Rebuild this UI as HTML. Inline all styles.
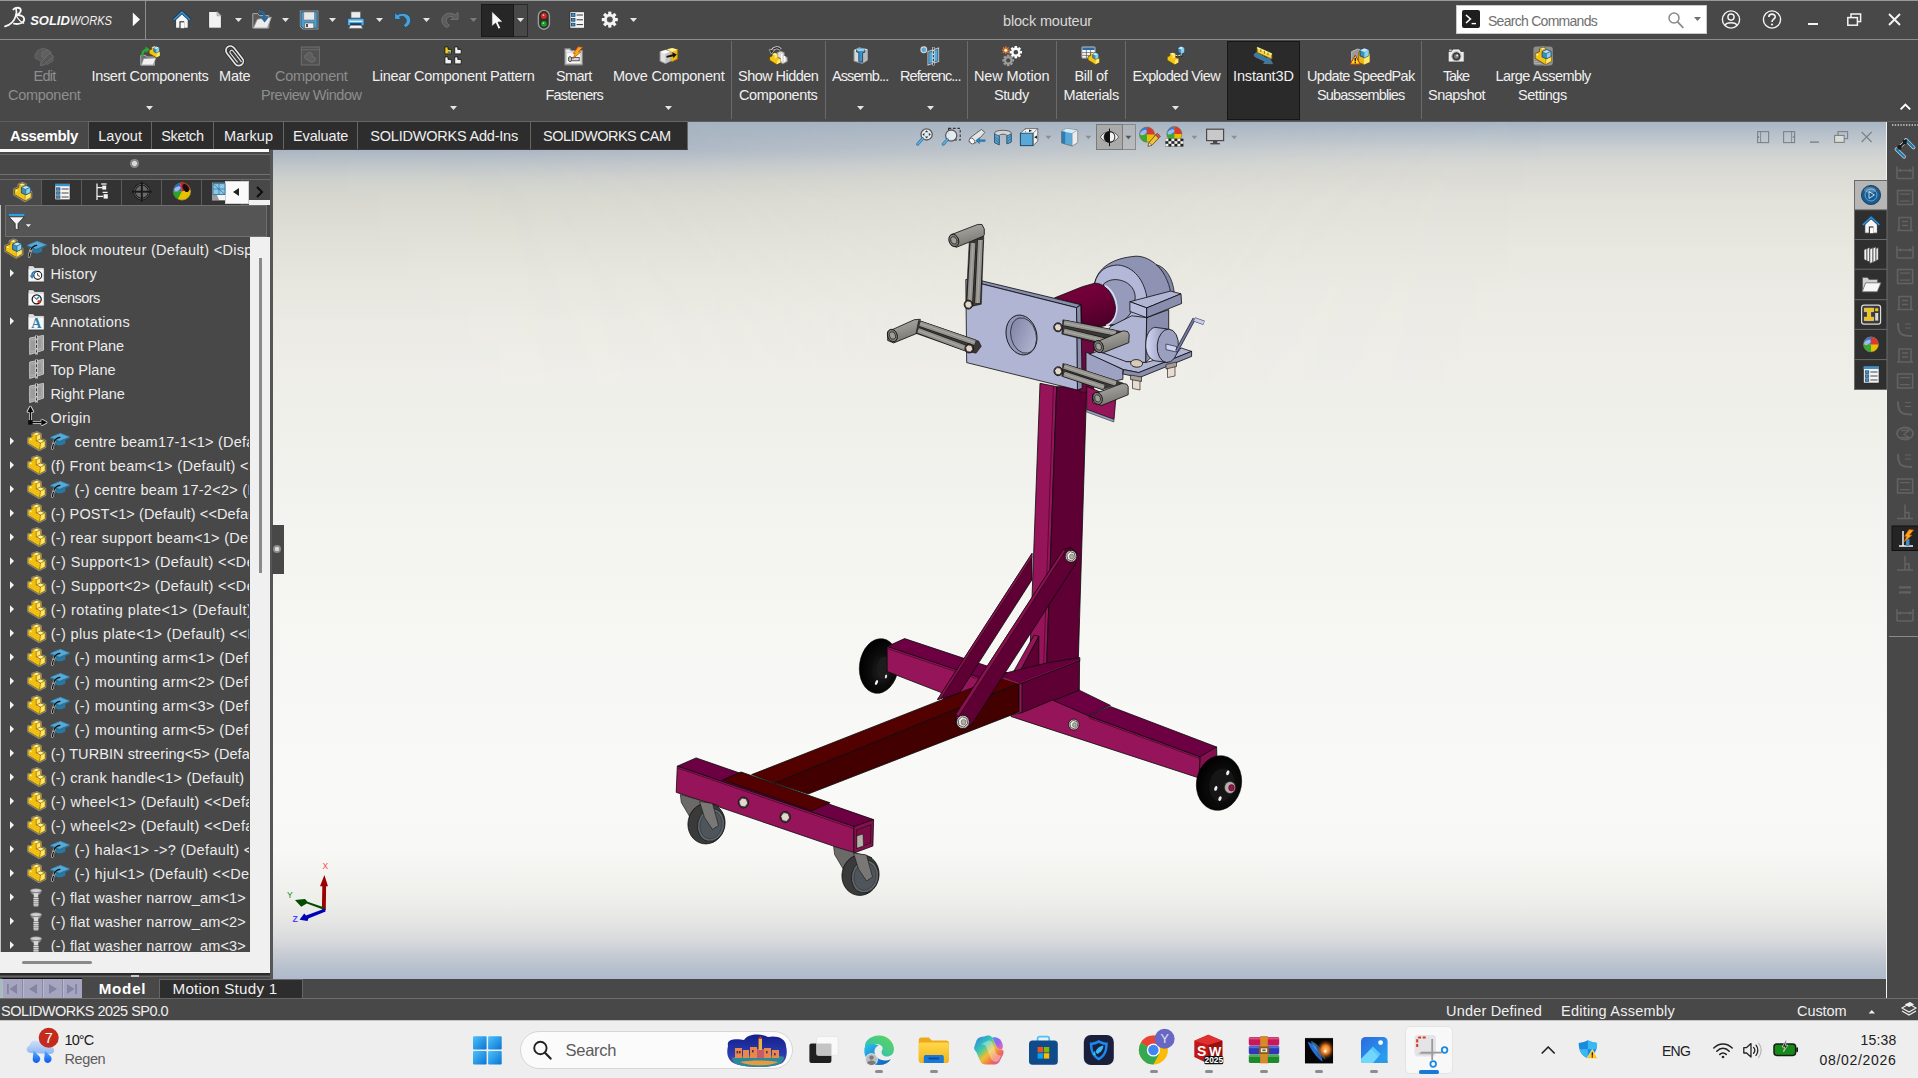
<!DOCTYPE html><html><head><meta charset="utf-8"><title>SOLIDWORKS</title><style>
html,body{margin:0;padding:0;background:#484848;font-family:"Liberation Sans",sans-serif;}
*{font-family:"Liberation Sans",sans-serif;}
body{width:1918px;height:1078px;overflow:hidden;font-family:"Liberation Sans",sans-serif;}
#root{position:relative;width:1918px;height:1078px;overflow:hidden;background:#484848;}
.a{position:absolute;}
.t{position:absolute;white-space:pre;font-family:"Liberation Sans",sans-serif;}
svg{position:absolute;overflow:visible;}

</style></head><body><div id="root">
<div class="a" id="vp" style="left:273px;top:122px;width:1614px;height:857px;background:linear-gradient(to bottom,#a8b5c3 0px,#b8c2cb 13px,#ccd0d1 28px,#d8d9d4 43px,#dddcd6 58px,#e2e2db 78px,#e8e7e0 128px,#ecebe5 178px,#eeede8 228px,#f0f0eb 300px,#f3f3ef 400px,#f6f6f3 500px,#f8f8f6 600px,#f9f9f8 658px,#f8f8f6 728px,#f2f2ef 758px,#eeeeeb 778px,#e6e6e4 798px,#d8dadc 818px,#c6cbd3 833px,#b5bfcd 848px,#aebacc 857px);"></div>
<div class="a" style="left:273px;top:122px;width:1614px;height:260px;background:linear-gradient(to bottom,#a6b2c0 0px,#aab5c3 28px,#bfc5c9 43px,#cfd1cc 58px,#d8d8d0 78px,#e0e0d8 118px,#e6e6de 156px,#ebeae4 200px,#efeee9 260px);-webkit-mask-image:linear-gradient(to right,#000 0%,rgba(0,0,0,0.97) 15%,rgba(0,0,0,0.85) 25%,rgba(0,0,0,0.6) 37%,rgba(0,0,0,0.35) 50%,rgba(0,0,0,0.14) 62%,rgba(0,0,0,0.03) 72%,transparent 80%);mask-image:linear-gradient(to right,#000 0%,rgba(0,0,0,0.97) 15%,rgba(0,0,0,0.85) 25%,rgba(0,0,0,0.6) 37%,rgba(0,0,0,0.35) 50%,rgba(0,0,0,0.14) 62%,rgba(0,0,0,0.03) 72%,transparent 80%);"></div>
<svg style="left:0;top:0" width="1918" height="1078" viewBox="0 0 1918 1078"><defs><linearGradient id="gHole" x1="0" y1="0" x2="1" y2="1"><stop offset="0" stop-color="#7c80a0"/><stop offset="1" stop-color="#b8bcd8"/></linearGradient><linearGradient id="gCyl" x1="0" y1="0" x2="1" y2="0"><stop offset="0" stop-color="#d4d8f6"/><stop offset="0.6" stop-color="#a8accc"/><stop offset="1" stop-color="#9094b4"/></linearGradient><linearGradient id="gTube" x1="0" y1="0" x2="0.4" y2="1"><stop offset="0" stop-color="#7c003c"/><stop offset="0.55" stop-color="#6a0036"/><stop offset="1" stop-color="#4c0028"/></linearGradient><linearGradient id="gGrip" x1="0" y1="0" x2="0.35" y2="1"><stop offset="0" stop-color="#aeaca6"/><stop offset="0.5" stop-color="#96948e"/><stop offset="1" stop-color="#787670"/></linearGradient><radialGradient id="gWheel" cx="0.6" cy="0.55" r="0.6"><stop offset="0" stop-color="#2a2a2a"/><stop offset="0.5" stop-color="#0c0c0c"/><stop offset="1" stop-color="#000"/></radialGradient></defs><ellipse cx="879.0" cy="666.0" rx="19.5" ry="27.5" fill="url(#gWheel)" stroke="#000" stroke-width="0.5" transform="rotate(8 879.0 666.0)"/><ellipse cx="884.0" cy="668.0" rx="8.0" ry="12.0" fill="#1c1c1c" stroke="#000" stroke-width="0.3" transform="rotate(8 884.0 668.0)"/><ellipse cx="876.5" cy="682.5" rx="1.3" ry="2.6" fill="#f4f4f4" stroke="none" stroke-width="0" transform="rotate(25 876.5 682.5)"/><ellipse cx="886.0" cy="676.5" rx="1.1" ry="2.0" fill="#e0e0e0" stroke="none" stroke-width="0" transform="rotate(10 886.0 676.5)"/><polygon points="887.1,646.5 904.6,638.6 1014.0,675.0 992.0,682.0" fill="#6c0042" stroke="#0a0a0a" stroke-width="0.8" stroke-linejoin="round" /><polygon points="887.1,646.5 992.0,681.8 992.0,690.0 945.0,702.0 940.7,692.3 887.1,671.5" fill="#96145a" stroke="#0a0a0a" stroke-width="0.8" stroke-linejoin="round" /><polyline points="887.5,648.6 985.0,681.4" fill="none" stroke="#3a0020" stroke-width="0.6"/><polygon points="1032.0,553.4 1032.0,579.7 959.0,693.6 937.5,699.5" fill="#5e0034" stroke="#0a0a0a" stroke-width="0.8" stroke-linejoin="round" /><polygon points="1032.0,553.4 1032.0,557.6 940.6,699.0 937.5,699.5" fill="#8a1050" stroke="#0a0a0a" stroke-width="0.5" stroke-linejoin="round" /><polygon points="751.7,774.6 998.7,677.4 1019.1,683.5 774.6,783.1" fill="#520000" stroke="#0a0a0a" stroke-width="0.8" stroke-linejoin="round" /><polygon points="774.6,783.1 1019.1,683.5 1019.1,712.0 808.1,794.0" fill="#430000" stroke="#0a0a0a" stroke-width="0.8" stroke-linejoin="round" /><polygon points="1040.0,383.3 1056.7,386.7 1046.5,668.5 1029.3,670.0" fill="#96145a" stroke="#0a0a0a" stroke-width="0.8" stroke-linejoin="round" /><polygon points="1056.7,386.7 1086.7,386.3 1078.3,660.0 1046.5,668.5" fill="#5e0034" stroke="#0a0a0a" stroke-width="0.8" stroke-linejoin="round" /><polyline points="1053.5,386.0 1043.5,668.8" fill="none" stroke="#3a0020" stroke-width="0.6"/><polygon points="1038.8,636.2 1038.8,670.3 1017.4,676.1" fill="#5e0034" stroke="#0a0a0a" stroke-width="0.8" stroke-linejoin="round" /><polygon points="1034.0,635.2 1038.8,636.2 1017.4,676.1 1011.6,675.1" fill="#96145a" stroke="#0a0a0a" stroke-width="0.8" stroke-linejoin="round" /><polygon points="998.0,675.1 1011.6,671.5 1046.5,663.0 1079.8,657.6 1079.8,661.0 1022.2,683.5 1019.1,684.0" fill="#66003a" stroke="#0a0a0a" stroke-width="0.8" stroke-linejoin="round" /><polyline points="998.4,676.4 1019.4,683.6 1079.6,660.4" fill="none" stroke="#8a1a56" stroke-width="1.2"/><polygon points="1019.1,683.5 1022.2,683.0 1022.2,713.1 1019.1,714.2" fill="#96145a" stroke="#0a0a0a" stroke-width="0.8" stroke-linejoin="round" /><polygon points="1022.2,683.0 1079.6,660.6 1079.3,690.6 1022.2,713.6" fill="#5e0034" stroke="#0a0a0a" stroke-width="0.8" stroke-linejoin="round" /><polygon points="1010.8,714.8 1022.2,712.6 1053.5,699.6 1088.5,716.0 1200.2,756.8 1199.1,778.0 1011.0,716.5" fill="#96145a" stroke="#0a0a0a" stroke-width="0.8" stroke-linejoin="round" /><polygon points="1053.5,700.6 1079.3,690.2 1110.4,705.4 1088.5,715.6" fill="#6c0042" stroke="#0a0a0a" stroke-width="0.8" stroke-linejoin="round" /><polygon points="1088.5,715.9 1110.4,706.5 1216.6,747.0 1200.2,756.8" fill="#6c0042" stroke="#0a0a0a" stroke-width="0.8" stroke-linejoin="round" /><polyline points="1089.0,718.0 1200.0,758.6" fill="none" stroke="#3a0020" stroke-width="0.6"/><polygon points="1200.2,756.8 1216.6,747.0 1217.0,762.0 1199.1,778.0" fill="#86104e" stroke="#0a0a0a" stroke-width="0.8" stroke-linejoin="round" /><ellipse cx="1219.0" cy="783.0" rx="22.5" ry="27.5" fill="url(#gWheel)" stroke="#000" stroke-width="0.5" transform="rotate(10 1219.0 783.0)"/><ellipse cx="1222.0" cy="785.0" rx="13.0" ry="17.0" fill="#161616" stroke="#000" stroke-width="0.3" transform="rotate(10 1222.0 785.0)"/><ellipse cx="1227.8" cy="772.8" rx="1.5" ry="2.5" fill="#f0f0f0" stroke="none" stroke-width="0" transform="rotate(20 1227.8 772.8)"/><ellipse cx="1215.8" cy="788.4" rx="1.5" ry="2.5" fill="#f0f0f0" stroke="none" stroke-width="0" transform="rotate(20 1215.8 788.4)"/><ellipse cx="1220.0" cy="798.6" rx="1.5" ry="2.5" fill="#f0f0f0" stroke="none" stroke-width="0" transform="rotate(20 1220.0 798.6)"/><ellipse cx="1230.0" cy="787.5" rx="5.5" ry="6.0" fill="#b8b0a8" stroke="#222" stroke-width="0.6" transform="rotate(0 1230.0 787.5)"/><ellipse cx="1231.5" cy="787.8" rx="2.8" ry="3.2" fill="#96145a" stroke="#400" stroke-width="0.5" transform="rotate(0 1231.5 787.8)"/><polygon points="1063.2,549.5 1071.0,547.6 1077.0,553.0 1075.9,563.1 971.6,724.8 963.0,729.0 955.0,723.3 956.0,714.0" fill="#5e0034" stroke="#0a0a0a" stroke-width="0.8" stroke-linejoin="round" /><polygon points="1063.2,549.5 1065.6,550.6 958.6,716.6 956.0,714.0" fill="#8a1050" stroke="#0a0a0a" stroke-width="0.5" stroke-linejoin="round" /><ellipse cx="1071.0" cy="556.3" rx="5.8" ry="6.0" fill="#d4ccc4" stroke="#0a0a0a" stroke-width="0.8" transform="rotate(0 1071.0 556.3)"/><polygon points="1075.2,557.9 1071.8,561.0 1067.6,559.4 1066.8,554.7 1070.2,551.6 1074.4,553.2" fill="#f2eee8" stroke="#0a0a0a" stroke-width="0.6" stroke-linejoin="round" /><ellipse cx="1071.6" cy="556.6" rx="2.1" ry="2.5" fill="#b4aca4" stroke="#444" stroke-width="0.5" transform="rotate(0 1071.6 556.6)"/><ellipse cx="962.9" cy="721.9" rx="6.4" ry="6.7" fill="#d4ccc4" stroke="#0a0a0a" stroke-width="0.8" transform="rotate(0 962.9 721.9)"/><polygon points="967.6,723.7 963.8,727.1 959.0,725.3 958.2,720.1 962.0,716.7 966.8,718.5" fill="#f2eee8" stroke="#0a0a0a" stroke-width="0.6" stroke-linejoin="round" /><ellipse cx="963.5" cy="722.2" rx="2.4" ry="2.8" fill="#b4aca4" stroke="#444" stroke-width="0.5" transform="rotate(0 963.5 722.2)"/><ellipse cx="1073.8" cy="724.6" rx="5.3" ry="5.5" fill="#d4ccc4" stroke="#0a0a0a" stroke-width="0.8" transform="rotate(0 1073.8 724.6)"/><polygon points="1077.7,726.1 1074.5,728.9 1070.6,727.4 1069.9,723.1 1073.1,720.3 1077.0,721.8" fill="#f2eee8" stroke="#0a0a0a" stroke-width="0.6" stroke-linejoin="round" /><ellipse cx="1074.4" cy="724.9" rx="1.9" ry="2.3" fill="#b4aca4" stroke="#444" stroke-width="0.5" transform="rotate(0 1074.4 724.9)"/><polygon points="677.3,766.2 696.1,757.9 873.6,819.6 853.9,826.6" fill="#6c0042" stroke="#0a0a0a" stroke-width="0.8" stroke-linejoin="round" /><polygon points="722.6,779.9 741.1,772.0 830.1,802.8 811.6,810.8" fill="#520000" stroke="#0a0a0a" stroke-width="0.8" stroke-linejoin="round" /><polygon points="677.3,766.2 853.9,826.6 853.9,853.1 676.2,792.3" fill="#96145a" stroke="#0a0a0a" stroke-width="0.8" stroke-linejoin="round" /><polyline points="678.0,768.2 853.9,828.6" fill="none" stroke="#3a0020" stroke-width="0.6"/><polygon points="853.9,826.6 873.6,819.6 872.9,846.0 853.9,853.1" fill="#86104e" stroke="#0a0a0a" stroke-width="0.8" stroke-linejoin="round" /><polygon points="856.5,830.0 871.0,824.5 870.5,843.0 856.5,848.5" fill="#7a0c46" stroke="#0a0a0a" stroke-width="0.5" stroke-linejoin="round" /><polygon points="856.8,836.0 863.0,834.0 863.5,846.0 856.8,848.3" fill="#b8b0a8" stroke="#0a0a0a" stroke-width="0.5" stroke-linejoin="round" /><ellipse cx="743.4" cy="802.5" rx="5.2" ry="5.5" fill="#55504a" stroke="#0a0a0a" stroke-width="0.8" transform="rotate(0 743.4 802.5)"/><polygon points="747.8,803.3 744.9,806.9 740.6,806.1 739.0,801.7 741.9,798.1 746.2,798.9" fill="#e4d8cc" stroke="#0a0a0a" stroke-width="0.6" stroke-linejoin="round" /><ellipse cx="785.2" cy="817.0" rx="5.2" ry="5.5" fill="#55504a" stroke="#0a0a0a" stroke-width="0.8" transform="rotate(0 785.2 817.0)"/><polygon points="789.6,817.8 786.7,821.4 782.4,820.6 780.8,816.2 783.7,812.6 788.0,813.4" fill="#e4d8cc" stroke="#0a0a0a" stroke-width="0.6" stroke-linejoin="round" /><polygon points="680.3,794.5 718.3,805.5 716.3,818.5 694.3,824.5 681.3,802.5" fill="#6c6a68" stroke="#0a0a0a" stroke-width="0.6" stroke-linejoin="round" /><ellipse cx="706.5" cy="823.5" rx="18.5" ry="20.5" fill="#3a3a3a" stroke="#0a0a0a" stroke-width="0.7" transform="rotate(12 706.5 823.5)"/><ellipse cx="711.0" cy="825.0" rx="13.5" ry="16.5" fill="#5f666c" stroke="#0a0a0a" stroke-width="0.6" transform="rotate(12 711.0 825.0)"/><ellipse cx="711.0" cy="825.0" rx="11.0" ry="14.0" fill="#4e555b" stroke="#222" stroke-width="0.4" transform="rotate(12 711.0 825.0)"/><polygon points="699.5,801.5 712.5,803.5 718.5,825.5 712.5,829.5 704.5,817.5" fill="#7a7876" stroke="#0a0a0a" stroke-width="0.5" stroke-linejoin="round" /><polygon points="833.6,846.5 871.6,857.5 869.6,870.5 847.6,876.5 834.6,854.5" fill="#6c6a68" stroke="#0a0a0a" stroke-width="0.6" stroke-linejoin="round" /><ellipse cx="860.5" cy="875.0" rx="18.5" ry="20.5" fill="#3a3a3a" stroke="#0a0a0a" stroke-width="0.7" transform="rotate(12 860.5 875.0)"/><ellipse cx="865.0" cy="876.5" rx="13.5" ry="16.5" fill="#5f666c" stroke="#0a0a0a" stroke-width="0.6" transform="rotate(12 865.0 876.5)"/><ellipse cx="865.0" cy="876.5" rx="11.0" ry="14.0" fill="#4e555b" stroke="#222" stroke-width="0.4" transform="rotate(12 865.0 876.5)"/><polygon points="853.5,853.0 866.5,855.0 872.5,877.0 866.5,881.0 858.5,869.0" fill="#7a7876" stroke="#0a0a0a" stroke-width="0.5" stroke-linejoin="round" /><polygon points="1080.0,303.0 1094.0,300.0 1094.0,392.0 1080.0,392.0" fill="#6a0a3e" stroke="#0a0a0a" stroke-width="0.4" stroke-linejoin="round" /><polygon points="1086.7,386.3 1115.8,398.7 1114.0,419.5 1086.7,409.5" fill="#96145a" stroke="#0a0a0a" stroke-width="0.8" stroke-linejoin="round" /><polygon points="1086.7,409.5 1114.0,419.5 1113.8,422.0 1086.7,412.0" fill="#9da1c2" stroke="#0a0a0a" stroke-width="0.5" stroke-linejoin="round" /><polygon points="1086.0,352.0 1122.9,369.5 1122.9,379.3 1100.0,384.0 1086.0,380.0" fill="#9da1c2" stroke="#0a0a0a" stroke-width="0.8" stroke-linejoin="round" /><path d="M1094.7,283 C1098,268 1112,258 1136,256.2 C1152,256 1166,272 1170.5,286 L1174,293 L1147,318 L1110,326 Z" fill="#8f93b3" stroke="#0a0a0a" stroke-width="0.8"/><path d="M1156.4,264.7 C1166,267 1173,279 1174.3,293 L1170.5,292 C1169,282 1163,270 1156.4,264.7 Z" fill="#8286a6" stroke="#0a0a0a" stroke-width="0.7"/><path d="M1094.7,283 C1098,270 1107,265.5 1117.6,265 C1133,266 1145,280 1147.2,300 L1146,318 L1100,322 Z" fill="#b4b8d8" stroke="#0a0a0a" stroke-width="0.8"/><path d="M1103.5,284.1 C1108,280 1113,279.3 1117.6,279.7 C1128,281 1135,288 1135.2,297 C1135,310 1128,320 1115.8,324.6 L1100,325 Z" fill="#969abb" stroke="#0a0a0a" stroke-width="0.8"/><polygon points="1110.5,326.4 1131.7,315.8 1146.7,317.6 1145.8,362.5 1124.6,361.7 1098.0,351.0" fill="#b1b5d4" stroke="#0a0a0a" stroke-width="0.8" stroke-linejoin="round" /><polygon points="1146.7,317.6 1168.7,309.6 1168.7,340.0 1145.8,362.5" fill="#8a8eae" stroke="#0a0a0a" stroke-width="0.8" stroke-linejoin="round" /><path d="M1054.7,297.8 L1082.3,286.7 L1094.7,283.2 C1106,283 1115,296 1115.8,310.5 C1115,320 1110,324 1105.2,325.5 L1081.8,332 L1081.2,305 Z" fill="url(#gTube)" stroke="#0a0a0a" stroke-width="0.8"/><path d="M1105.2,285.8 C1114,291 1118,303 1116.5,312 C1115,320 1110,324.5 1106,325.5" fill="none" stroke="#d8dcf4" stroke-width="1.6"/><polygon points="1129.9,301.7 1170.5,291.1 1181.0,293.8 1146.7,307.9" fill="#b1b5d4" stroke="#0a0a0a" stroke-width="0.8" stroke-linejoin="round" /><polygon points="1129.9,301.7 1146.7,307.9 1146.7,317.6 1129.9,311.4" fill="#b8bcdc" stroke="#0a0a0a" stroke-width="0.8" stroke-linejoin="round" /><polygon points="1146.7,307.9 1181.0,293.8 1181.6,303.5 1146.7,317.6" fill="#8a8eae" stroke="#0a0a0a" stroke-width="0.8" stroke-linejoin="round" /><polygon points="1098.2,351.1 1126.4,361.7 1131.7,361.7 1145.8,362.5 1175.8,354.6 1181.0,347.9 1191.6,351.4 1138.7,372.6 1123.7,369.6 1089.4,354.0" fill="#b1b5d4" stroke="#0a0a0a" stroke-width="0.8" stroke-linejoin="round" /><polygon points="1123.7,369.6 1138.7,372.6 1191.6,351.4 1191.6,356.4 1139.6,377.5 1122.9,374.0" fill="#8a8eae" stroke="#0a0a0a" stroke-width="0.8" stroke-linejoin="round" /><path d="M1154.6,327.3 L1167.8,329 L1167.8,362.5 L1154.6,360.8 C1147,358 1145.5,350 1145.8,344 C1146,336 1149,329 1154.6,327.3 Z" fill="url(#gCyl)" stroke="#0a0a0a" stroke-width="0.8"/><ellipse cx="1167.8" cy="345.8" rx="10.6" ry="16.7" fill="#9ca0c0" stroke="#0a0a0a" stroke-width="0.8" transform="rotate(4 1167.8 345.8)"/><polygon points="1166.0,344.0 1176.6,346.6 1176.6,352.0 1166.0,349.6" fill="#d0d4f4" stroke="#0a0a0a" stroke-width="0.6" stroke-linejoin="round" /><polyline points="1176.6,351.1 1194.3,318.5" fill="none" stroke="#2c2e40" stroke-width="3.4"/><polyline points="1176.6,351.1 1194.3,318.5" fill="none" stroke="#7478a0" stroke-width="1.8"/><polyline points="1194.3,319.3 1204.0,322.9" fill="none" stroke="#50546e" stroke-width="4.6"/><polyline points="1194.6,319.4 1203.6,322.8" fill="none" stroke="#c8ccf0" stroke-width="3.2"/><polygon points="1132.5,377.0 1140.0,378.5 1140.0,390.0 1132.5,388.5" fill="#e8dcd0" stroke="#0a0a0a" stroke-width="0.6" stroke-linejoin="round" /><polygon points="1130.5,375.0 1141.5,377.0 1141.5,381.5 1130.5,379.5" fill="#a8a098" stroke="#0a0a0a" stroke-width="0.6" stroke-linejoin="round" /><polygon points="1167.5,366.0 1175.0,364.0 1175.0,376.0 1167.5,377.5" fill="#e8dcd0" stroke="#0a0a0a" stroke-width="0.6" stroke-linejoin="round" /><polygon points="1166.0,364.5 1176.5,362.0 1176.5,366.5 1166.0,369.0" fill="#a8a098" stroke="#0a0a0a" stroke-width="0.6" stroke-linejoin="round" /><ellipse cx="1136.6" cy="363.4" rx="6.0" ry="3.8" fill="#d8ccb8" stroke="#0a0a0a" stroke-width="0.8" transform="rotate(5 1136.6 363.4)"/><polygon points="981.3,280.7 1080.4,304.6 1076.5,307.7 981.3,283.8" fill="#8a8eae" stroke="#0a0a0a" stroke-width="0.8" stroke-linejoin="round" /><polygon points="1076.5,307.7 1080.8,305.0 1082.2,388.3 1077.4,390.0" fill="#8a8eae" stroke="#0a0a0a" stroke-width="0.8" stroke-linejoin="round" /><polygon points="965.8,279.4 981.3,283.8 1076.5,307.7 1077.4,390.0 966.7,362.6" fill="#b1b5d4" stroke="#0a0a0a" stroke-width="0.8" stroke-linejoin="round" /><ellipse cx="1021.5" cy="335.0" rx="15.2" ry="20.2" fill="#9296b6" stroke="#0a0a0a" stroke-width="0.8" transform="rotate(-14 1021.5 335.0)"/><ellipse cx="1023.5" cy="335.5" rx="12.6" ry="18.0" fill="url(#gHole)" stroke="#0a0a0a" stroke-width="0.6" transform="rotate(-14 1023.5 335.5)"/><polygon points="951.2,234.7 977.8,224.4 982.0,224.5 984.3,229.0 984.3,234.7 983.0,236.5 956.4,247.3 951.0,245.0" fill="url(#gGrip)" stroke="#0a0a0a" stroke-width="0.8" stroke-linejoin="round" /><ellipse cx="953.8" cy="240.4" rx="4.8" ry="6.4" fill="#7c7a76" stroke="#0a0a0a" stroke-width="0.8" transform="rotate(-20 953.8 240.4)"/><ellipse cx="953.8" cy="240.4" rx="2.9" ry="3.8" fill="#a09e98" stroke="#0a0a0a" stroke-width="0.6" transform="rotate(-20 953.8 240.4)"/><polygon points="969.2,242.5 983.8,236.0 981.3,304.2 965.8,307.7" fill="#3a3836" stroke="#0a0a0a" stroke-width="0.5" stroke-linejoin="round" /><polyline points="973.0,243.0 969.6,304.5" fill="none" stroke="#141412" stroke-width="6.2"/><polyline points="973.0,243.0 969.6,304.5" fill="none" stroke="#94928c" stroke-width="5.0"/><polyline points="973.0,243.0 969.6,304.5" fill="none" stroke="#aeaca6" stroke-width="1.0"/><polyline points="980.4,240.0 977.6,303.0" fill="none" stroke="#141412" stroke-width="6.2"/><polyline points="980.4,240.0 977.6,303.0" fill="none" stroke="#94928c" stroke-width="5.0"/><polyline points="980.4,240.0 977.6,303.0" fill="none" stroke="#aeaca6" stroke-width="1.0"/><ellipse cx="968.4" cy="304.6" rx="4.3" ry="4.5" fill="#55504a" stroke="#0a0a0a" stroke-width="0.8" transform="rotate(0 968.4 304.6)"/><polygon points="972.0,305.3 969.7,308.2 966.1,307.6 964.8,303.9 967.1,301.0 970.7,301.6" fill="#e4d8cc" stroke="#0a0a0a" stroke-width="0.6" stroke-linejoin="round" /><polygon points="887.7,331.7 914.3,319.7 920.3,319.3 919.0,328.0 916.9,333.4 893.7,342.9 887.7,340.5" fill="url(#gGrip)" stroke="#0a0a0a" stroke-width="0.8" stroke-linejoin="round" /><ellipse cx="892.4" cy="335.5" rx="4.8" ry="6.4" fill="#7c7a76" stroke="#0a0a0a" stroke-width="0.8" transform="rotate(-20 892.4 335.5)"/><ellipse cx="892.4" cy="335.5" rx="2.9" ry="3.8" fill="#a09e98" stroke="#0a0a0a" stroke-width="0.6" transform="rotate(-20 892.4 335.5)"/><polygon points="918.6,320.5 978.7,341.1 981.3,346.3 976.1,353.2 966.7,351.4 916.0,333.4" fill="#3a3836" stroke="#0a0a0a" stroke-width="0.5" stroke-linejoin="round" /><polyline points="920.0,323.6 975.0,342.6" fill="none" stroke="#141412" stroke-width="6.2"/><polyline points="920.0,323.6 975.0,342.6" fill="none" stroke="#94928c" stroke-width="5.0"/><polyline points="920.0,323.6 975.0,342.6" fill="none" stroke="#aeaca6" stroke-width="1.0"/><polyline points="918.0,330.4 969.0,349.4" fill="none" stroke="#141412" stroke-width="6.2"/><polyline points="918.0,330.4 969.0,349.4" fill="none" stroke="#94928c" stroke-width="5.0"/><polyline points="918.0,330.4 969.0,349.4" fill="none" stroke="#aeaca6" stroke-width="1.0"/><ellipse cx="969.2" cy="348.5" rx="4.3" ry="4.5" fill="#55504a" stroke="#0a0a0a" stroke-width="0.8" transform="rotate(0 969.2 348.5)"/><polygon points="972.8,349.2 970.5,352.1 966.9,351.5 965.6,347.8 967.9,344.9 971.5,345.5" fill="#e4d8cc" stroke="#0a0a0a" stroke-width="0.6" stroke-linejoin="round" /><polygon points="1062.9,319.8 1123.1,331.8 1100.6,343.7 1061.8,334.1" fill="#3a3836" stroke="#0a0a0a" stroke-width="0.5" stroke-linejoin="round" /><polyline points="1064.0,322.8 1116.0,333.2" fill="none" stroke="#141412" stroke-width="6.2"/><polyline points="1064.0,322.8 1116.0,333.2" fill="none" stroke="#94928c" stroke-width="5.0"/><polyline points="1064.0,322.8 1116.0,333.2" fill="none" stroke="#aeaca6" stroke-width="1.0"/><polyline points="1064.0,331.0 1104.0,340.6" fill="none" stroke="#141412" stroke-width="6.2"/><polyline points="1064.0,331.0 1104.0,340.6" fill="none" stroke="#94928c" stroke-width="5.0"/><polyline points="1064.0,331.0 1104.0,340.6" fill="none" stroke="#aeaca6" stroke-width="1.0"/><ellipse cx="1058.0" cy="327.3" rx="4.3" ry="4.5" fill="#55504a" stroke="#0a0a0a" stroke-width="0.8" transform="rotate(0 1058.0 327.3)"/><polygon points="1061.6,328.0 1059.3,330.9 1055.7,330.3 1054.4,326.6 1056.7,323.7 1060.3,324.3" fill="#e4d8cc" stroke="#0a0a0a" stroke-width="0.6" stroke-linejoin="round" /><polygon points="1094.5,342.7 1123.1,330.8 1127.5,331.5 1129.2,334.5 1128.8,342.7 1102.7,352.9 1094.5,350.8" fill="url(#gGrip)" stroke="#0a0a0a" stroke-width="0.8" stroke-linejoin="round" /><ellipse cx="1098.6" cy="346.6" rx="4.6" ry="6.2" fill="#7c7a76" stroke="#0a0a0a" stroke-width="0.8" transform="rotate(-20 1098.6 346.6)"/><ellipse cx="1098.6" cy="346.6" rx="2.8" ry="3.7" fill="#a09e98" stroke="#0a0a0a" stroke-width="0.6" transform="rotate(-20 1098.6 346.6)"/><polygon points="1062.9,363.5 1123.1,383.1 1102.7,389.6 1061.8,376.3" fill="#3a3836" stroke="#0a0a0a" stroke-width="0.5" stroke-linejoin="round" /><polyline points="1064.0,366.4 1116.0,383.4" fill="none" stroke="#141412" stroke-width="6.2"/><polyline points="1064.0,366.4 1116.0,383.4" fill="none" stroke="#94928c" stroke-width="5.0"/><polyline points="1064.0,366.4 1116.0,383.4" fill="none" stroke="#aeaca6" stroke-width="1.0"/><polyline points="1064.0,373.8 1104.0,387.2" fill="none" stroke="#141412" stroke-width="6.2"/><polyline points="1064.0,373.8 1104.0,387.2" fill="none" stroke="#94928c" stroke-width="5.0"/><polyline points="1064.0,373.8 1104.0,387.2" fill="none" stroke="#aeaca6" stroke-width="1.0"/><ellipse cx="1058.2" cy="371.2" rx="4.3" ry="4.5" fill="#55504a" stroke="#0a0a0a" stroke-width="0.8" transform="rotate(0 1058.2 371.2)"/><polygon points="1061.8,371.9 1059.5,374.8 1055.9,374.2 1054.6,370.5 1056.9,367.6 1060.5,368.2" fill="#e4d8cc" stroke="#0a0a0a" stroke-width="0.6" stroke-linejoin="round" /><polygon points="1092.4,394.7 1122.0,383.5 1126.5,384.0 1128.2,386.5 1128.2,394.7 1101.6,405.5 1092.9,402.9" fill="url(#gGrip)" stroke="#0a0a0a" stroke-width="0.8" stroke-linejoin="round" /><ellipse cx="1097.6" cy="398.4" rx="4.6" ry="6.2" fill="#7c7a76" stroke="#0a0a0a" stroke-width="0.8" transform="rotate(-20 1097.6 398.4)"/><ellipse cx="1097.6" cy="398.4" rx="2.8" ry="3.7" fill="#a09e98" stroke="#0a0a0a" stroke-width="0.6" transform="rotate(-20 1097.6 398.4)"/></svg>
<div class="a" style="left:0px;top:0px;width:1918px;height:1px;background:#9a9a9a;"></div>
<div class="a" style="left:0px;top:39px;width:1918px;height:1px;background:#8c8c8c;"></div>
<div class="a" style="left:145px;top:1px;width:1px;height:38px;background:#8c8c8c;"></div>
<div class="a" style="left:481px;top:4px;width:33px;height:33px;background:#262626;border:1px solid #1a1a1a;box-sizing:border-box;"></div>
<div class="a" style="left:514px;top:4px;width:14px;height:33px;background:#484848;border:1px solid #2a2a2a;border-left:none;box-sizing:border-box;"></div>
<svg style="left:234.5px;top:17.5px" width="7" height="4" viewBox="0 0 7 4"><polygon points="0,0 7,0 3.5,4" fill="#e6e6e6"/></svg>
<svg style="left:281.5px;top:17.5px" width="7" height="4" viewBox="0 0 7 4"><polygon points="0,0 7,0 3.5,4" fill="#e6e6e6"/></svg>
<svg style="left:328.5px;top:17.5px" width="7" height="4" viewBox="0 0 7 4"><polygon points="0,0 7,0 3.5,4" fill="#e6e6e6"/></svg>
<svg style="left:375.5px;top:17.5px" width="7" height="4" viewBox="0 0 7 4"><polygon points="0,0 7,0 3.5,4" fill="#e6e6e6"/></svg>
<svg style="left:422.5px;top:17.5px" width="7" height="4" viewBox="0 0 7 4"><polygon points="0,0 7,0 3.5,4" fill="#e6e6e6"/></svg>
<svg style="left:469.5px;top:17.5px" width="7" height="4" viewBox="0 0 7 4"><polygon points="0,0 7,0 3.5,4" fill="#7a7a7a"/></svg>
<svg style="left:517.0px;top:17.5px" width="7" height="4" viewBox="0 0 7 4"><polygon points="0,0 7,0 3.5,4" fill="#e6e6e6"/></svg>
<svg style="left:630.0px;top:17.5px" width="7" height="4" viewBox="0 0 7 4"><polygon points="0,0 7,0 3.5,4" fill="#e6e6e6"/></svg>
<div class="a" style="left:1456px;top:5px;width:251px;height:29px;background:#ffffff;border:1px solid #c8c8c8;box-sizing:border-box;"></div>
<div class="a" style="left:1462px;top:10px;width:18px;height:18px;background:#1e1e1e;border-radius:2px;"></div>
<svg style="left:1694.0px;top:17.0px" width="7" height="4" viewBox="0 0 7 4"><polygon points="0,0 7,0 3.5,4" fill="#707070"/></svg>
<div class="a" style="left:731px;top:41px;width:1px;height:78px;background:#6a6a6a;"></div>
<div class="a" style="left:825px;top:41px;width:1px;height:78px;background:#6a6a6a;"></div>
<div class="a" style="left:967px;top:41px;width:1px;height:78px;background:#6a6a6a;"></div>
<div class="a" style="left:1056px;top:41px;width:1px;height:78px;background:#6a6a6a;"></div>
<div class="a" style="left:1125px;top:41px;width:1px;height:78px;background:#6a6a6a;"></div>
<div class="a" style="left:1421px;top:41px;width:1px;height:78px;background:#6a6a6a;"></div>
<div class="a" style="left:1227px;top:41px;width:73px;height:79px;background:#2a2a2a;border:1px solid #161616;box-sizing:border-box;"></div>
<svg style="left:145.5px;top:106.0px" width="7" height="4" viewBox="0 0 7 4"><polygon points="0,0 7,0 3.5,4" fill="#e6e6e6"/></svg>
<svg style="left:449.5px;top:106.0px" width="7" height="4" viewBox="0 0 7 4"><polygon points="0,0 7,0 3.5,4" fill="#e6e6e6"/></svg>
<svg style="left:664.5px;top:106.0px" width="7" height="4" viewBox="0 0 7 4"><polygon points="0,0 7,0 3.5,4" fill="#e6e6e6"/></svg>
<svg style="left:856.5px;top:106.0px" width="7" height="4" viewBox="0 0 7 4"><polygon points="0,0 7,0 3.5,4" fill="#e6e6e6"/></svg>
<svg style="left:926.5px;top:106.0px" width="7" height="4" viewBox="0 0 7 4"><polygon points="0,0 7,0 3.5,4" fill="#e6e6e6"/></svg>
<svg style="left:1171.5px;top:106.0px" width="7" height="4" viewBox="0 0 7 4"><polygon points="0,0 7,0 3.5,4" fill="#e6e6e6"/></svg>
<div class="a" style="left:0px;top:121px;width:1918px;height:1px;background:#5e5e5e;"></div>
<div class="a" style="left:88px;top:121px;width:600px;height:29px;background:#2d2d2d;border:1px solid #666;border-bottom:1px solid #3a3a3a;box-sizing:border-box;"></div>
<div class="a" style="left:151px;top:122px;width:1px;height:27px;background:#666;"></div>
<div class="a" style="left:213px;top:122px;width:1px;height:27px;background:#666;"></div>
<div class="a" style="left:283px;top:122px;width:1px;height:27px;background:#666;"></div>
<div class="a" style="left:357px;top:122px;width:1px;height:27px;background:#666;"></div>
<div class="a" style="left:530px;top:122px;width:1px;height:27px;background:#666;"></div>
<div class="a" style="left:0px;top:150px;width:272px;height:829px;background:#484848;"></div>
<div class="a" style="left:0px;top:149.4px;width:269.4px;height:2.8px;background:#fafafa;"></div>
<div class="a" style="left:0px;top:154px;width:270px;height:1px;background:#6a6a6a;"></div>
<div class="a" style="left:0px;top:174px;width:270px;height:1px;background:#707070;"></div>
<div class="a" style="left:130px;top:159px;width:9px;height:9px;border-radius:50%;background:radial-gradient(circle,#d8d8d8 0 2.2px,#8a8a8a 2.8px 4.5px);"></div>
<div class="a" style="left:0px;top:179px;width:270px;height:1px;background:#6a6a6a;"></div>
<div class="a" style="left:41px;top:180px;width:200px;height:25px;background:#333333;"></div>
<div class="a" style="left:41px;top:180px;width:1px;height:25px;background:#5c5c5c;"></div>
<div class="a" style="left:81px;top:180px;width:1px;height:25px;background:#5c5c5c;"></div>
<div class="a" style="left:121px;top:180px;width:1px;height:25px;background:#5c5c5c;"></div>
<div class="a" style="left:161px;top:180px;width:1px;height:25px;background:#5c5c5c;"></div>
<div class="a" style="left:201px;top:180px;width:1px;height:25px;background:#5c5c5c;"></div>
<div class="a" style="left:241px;top:180px;width:1px;height:25px;background:#5c5c5c;"></div>
<div class="a" style="left:225px;top:181px;width:24px;height:23px;background:#fafafa;border:1px solid #d0d0d0;box-sizing:border-box;"></div>
<div class="a" style="left:249px;top:200px;width:21px;height:5px;background:#f2f2f2;"></div>
<svg style="left:233px;top:188px" width="6" height="8" viewBox="0 0 6 8"><polygon points="6,0 6,8 0,4" fill="#222"/></svg>
<svg style="left:256px;top:186px" width="7" height="12" viewBox="0 0 7 12"><polyline points="1,1 6,6 1,11" fill="none" stroke="#0a0a0a" stroke-width="1.8"/></svg>
<div class="a" style="left:5px;top:205px;width:262px;height:32px;background:#555555;border:1px solid #707070;box-sizing:border-box;"></div>
<div class="a" style="left:250px;top:237px;width:20px;height:715px;background:#f0f0f0;"></div>
<div class="a" style="left:259px;top:258px;width:3px;height:315px;background:#8a8a8a;"></div>
<div class="a" style="left:0px;top:952px;width:270px;height:22px;background:#f0f0f0;"></div>
<div class="a" style="left:22px;top:961px;width:70px;height:3px;background:#8a8a8a;border-radius:2px;"></div>
<div class="a" style="left:0px;top:972.8px;width:272px;height:2px;background:#2a2a2a;"></div>
<div class="a" style="left:0px;top:976px;width:272px;height:1px;background:#646464;"></div>
<div class="a" style="left:131px;top:975.4px;width:8px;height:1.6px;background:#c8c8c8;"></div>
<div class="a" style="left:0px;top:205px;width:1px;height:747px;background:#c4c4c4;"></div>
<div class="a" style="left:270px;top:150px;width:3px;height:829px;background:#565656;"></div>
<div class="a" style="left:272px;top:525px;width:12px;height:49px;background:#484848;"></div>
<div class="a" style="left:273px;top:545px;width:8px;height:8px;border-radius:50%;background:radial-gradient(circle,#d8d8d8 0 2px,#8a8a8a 2.6px 4px);"></div>
<svg style="left:0;top:0;clip-path:inset(237px 1668px 126px 0px)" width="1918" height="1078" viewBox="0 0 1918 1078"><g transform="translate(4.60 238.60) scale(1)"><polygon points="1,7.4 5.4,5.6 5.4,2.6 9,1.2 12,2.4 12,8 17.6,10 17.6,15.4 11.6,18.8 1,12.4" fill="#eebc0c" stroke="#8e8e8e" stroke-width="2.6" stroke-linejoin="round"/><polygon points="1,7.4 5.4,5.6 5.4,2.6 9,1.2 12,2.4 12,8 17.6,10 17.6,15.4 11.6,18.8 1,12.4" fill="#f2c414" stroke="#6e4c00" stroke-width="0.8" stroke-linejoin="round"/><polygon points="11.8,12.4 17.6,10 17.6,15.4 11.6,18.8" fill="#ffe562" stroke="#8a6400" stroke-width="0.5"/><polygon points="5.4,2.6 9,1.2 12,2.4 8.4,4" fill="#fff2a8" stroke="#8a6400" stroke-width="0.4"/><polygon points="8,5.6 12.6,3.6 17,5.2 17,10.6 12.4,12.8 8,11" fill="#3d8fbc" stroke="#12486a" stroke-width="0.8" stroke-linejoin="round"/><polygon points="8,5.6 12.6,3.6 17,5.2 12.4,7.4" fill="#bfe6f6" stroke="#12486a" stroke-width="0.5"/><polygon points="12.4,7.4 17,5.2 17,10.6 12.4,12.8" fill="#8fd0ec" stroke="#12486a" stroke-width="0.5"/><circle cx="3.2" cy="8.6" r="0.9" fill="#fff6c0"/></g><g transform="translate(26.90 241.00) scale(1)"><polygon points="4.8,7 15.4,6.4 15,10.8 10,12.4 5.4,11.4" fill="#2a78a2"/><polygon points="0,4.2 10.2,0 19.9,3.8 9.3,8.2" fill="#55a9d2" stroke="#2a7298" stroke-width="0.5"/><polygon points="0,4.2 9.3,8.2 19.9,3.8 19.9,4.9 9.3,9.3 0,5.3" fill="#2a7298"/><path d="M4.2,8.4 C3.2,10.6 2.8,12.6 2.2,15.4" fill="none" stroke="#c4c4c4" stroke-width="2.6" stroke-linecap="round"/><path d="M9.8,4.3 C6,4.8 4.6,6.8 3.8,9.4 C3.2,11.4 2.8,13 2.2,15.4" fill="none" stroke="#0c0c0c" stroke-width="1.2" stroke-linecap="round"/><circle cx="3.5" cy="10" r="0.7" fill="#f0f0f0"/></g><g transform="translate(10.00 269.30) scale(1)"><polygon points="0,0 4,3.8 0,7.6" fill="#f4f4f4"/></g><g transform="translate(10.00 317.30) scale(1)"><polygon points="0,0 4,3.8 0,7.6" fill="#f4f4f4"/></g><g transform="translate(10.00 437.30) scale(1)"><polygon points="0,0 4,3.8 0,7.6" fill="#f4f4f4"/></g><g transform="translate(10.00 461.30) scale(1)"><polygon points="0,0 4,3.8 0,7.6" fill="#f4f4f4"/></g><g transform="translate(10.00 485.30) scale(1)"><polygon points="0,0 4,3.8 0,7.6" fill="#f4f4f4"/></g><g transform="translate(10.00 509.30) scale(1)"><polygon points="0,0 4,3.8 0,7.6" fill="#f4f4f4"/></g><g transform="translate(10.00 533.30) scale(1)"><polygon points="0,0 4,3.8 0,7.6" fill="#f4f4f4"/></g><g transform="translate(10.00 557.30) scale(1)"><polygon points="0,0 4,3.8 0,7.6" fill="#f4f4f4"/></g><g transform="translate(10.00 581.30) scale(1)"><polygon points="0,0 4,3.8 0,7.6" fill="#f4f4f4"/></g><g transform="translate(10.00 605.30) scale(1)"><polygon points="0,0 4,3.8 0,7.6" fill="#f4f4f4"/></g><g transform="translate(10.00 629.30) scale(1)"><polygon points="0,0 4,3.8 0,7.6" fill="#f4f4f4"/></g><g transform="translate(10.00 653.30) scale(1)"><polygon points="0,0 4,3.8 0,7.6" fill="#f4f4f4"/></g><g transform="translate(10.00 677.30) scale(1)"><polygon points="0,0 4,3.8 0,7.6" fill="#f4f4f4"/></g><g transform="translate(10.00 701.30) scale(1)"><polygon points="0,0 4,3.8 0,7.6" fill="#f4f4f4"/></g><g transform="translate(10.00 725.30) scale(1)"><polygon points="0,0 4,3.8 0,7.6" fill="#f4f4f4"/></g><g transform="translate(10.00 749.30) scale(1)"><polygon points="0,0 4,3.8 0,7.6" fill="#f4f4f4"/></g><g transform="translate(10.00 773.30) scale(1)"><polygon points="0,0 4,3.8 0,7.6" fill="#f4f4f4"/></g><g transform="translate(10.00 797.30) scale(1)"><polygon points="0,0 4,3.8 0,7.6" fill="#f4f4f4"/></g><g transform="translate(10.00 821.30) scale(1)"><polygon points="0,0 4,3.8 0,7.6" fill="#f4f4f4"/></g><g transform="translate(10.00 845.30) scale(1)"><polygon points="0,0 4,3.8 0,7.6" fill="#f4f4f4"/></g><g transform="translate(10.00 869.30) scale(1)"><polygon points="0,0 4,3.8 0,7.6" fill="#f4f4f4"/></g><g transform="translate(10.00 893.30) scale(1)"><polygon points="0,0 4,3.8 0,7.6" fill="#f4f4f4"/></g><g transform="translate(10.00 917.30) scale(1)"><polygon points="0,0 4,3.8 0,7.6" fill="#f4f4f4"/></g><g transform="translate(10.00 941.30) scale(1)"><polygon points="0,0 4,3.8 0,7.6" fill="#f4f4f4"/></g><g transform="translate(27.40 265.20) scale(1.08)"><path d="M0.6,0.4 L5.6,0.4 L6.6,2 L15.6,2 L15.6,15.4 L0.6,15.4 Z" fill="#e0e0e0" stroke="#3a3a3a" stroke-width="0.9"/><rect x="1.2" y="3.6" width="14" height="11.2" fill="#f7f7f7" stroke="#bdbdbd" stroke-width="0.5"/><circle cx="9.6" cy="9.4" r="3.7" fill="#fff" stroke="#1a1a1a" stroke-width="1"/><polyline points="9.4,7.4 9.6,9.6 11.6,10.4" fill="none" stroke="#1a1a1a" stroke-width="0.8"/><path d="M8.2,5.4 C5.2,5.6 3.8,8 4.2,10.6" fill="none" stroke="#2f7cc0" stroke-width="1.6"/><polygon points="2,9.6 6.6,9.6 4.4,12.6" fill="#2f7cc0"/></g><g transform="translate(27.40 289.20) scale(1.08)"><path d="M0.6,0.4 L5.6,0.4 L6.6,2 L15.6,2 L15.6,15.4 L0.6,15.4 Z" fill="#e0e0e0" stroke="#3a3a3a" stroke-width="0.9"/><rect x="1.2" y="3.6" width="14" height="11.2" fill="#f7f7f7" stroke="#bdbdbd" stroke-width="0.5"/><circle cx="8.6" cy="9.4" r="4.2" fill="#fff" stroke="#1a1a1a" stroke-width="1.2"/><line x1="8.6" y1="9.4" x2="11.4" y2="6.4" stroke="#2f7cc0" stroke-width="1.3"/><line x1="8.6" y1="9.4" x2="6.4" y2="7.2" stroke="#1a1a1a" stroke-width="0.9"/><circle cx="10.8" cy="11.4" r="1.5" fill="#e03010"/></g><g transform="translate(27.40 313.20) scale(1.08)"><path d="M0.6,0.4 L5.6,0.4 L6.6,2 L15.6,2 L15.6,15.4 L0.6,15.4 Z" fill="#e0e0e0" stroke="#3a3a3a" stroke-width="0.9"/><rect x="1.2" y="3.6" width="14" height="11.2" fill="#f7f7f7" stroke="#bdbdbd" stroke-width="0.5"/><text x="8.2" y="14" style="font-family:Liberation Serif,serif" font-weight="700" font-size="13" text-anchor="middle" fill="#2d7fa8">A</text></g><g transform="translate(29.20 335.10) scale(1)"><polygon points="0.5,3 14.3,0.3 14.3,15 0.5,19.4" fill="#9c9c9c" stroke="#cfcfcf" stroke-width="0.9"/><line x1="7.3" y1="0.2" x2="7.3" y2="19.6" stroke="#cfcfcf" stroke-width="2.4"/><line x1="7.3" y1="0.6" x2="7.3" y2="19.4" stroke="#2a2a2a" stroke-width="0.9" stroke-dasharray="3 1.6"/><polyline points="2,5.2 12.8,2.8 12.8,13.2 2,16.6" fill="none" stroke="#c4c4c4" stroke-width="0.6"/></g><g transform="translate(29.20 359.10) scale(1)"><polygon points="0.5,3 14.3,0.3 14.3,15 0.5,19.4" fill="#9c9c9c" stroke="#cfcfcf" stroke-width="0.9"/><line x1="7.3" y1="0.2" x2="7.3" y2="19.6" stroke="#cfcfcf" stroke-width="2.4"/><line x1="7.3" y1="0.6" x2="7.3" y2="19.4" stroke="#2a2a2a" stroke-width="0.9" stroke-dasharray="3 1.6"/><polyline points="2,5.2 12.8,2.8 12.8,13.2 2,16.6" fill="none" stroke="#c4c4c4" stroke-width="0.6"/></g><g transform="translate(29.20 383.10) scale(1)"><polygon points="0.5,3 14.3,0.3 14.3,15 0.5,19.4" fill="#9c9c9c" stroke="#cfcfcf" stroke-width="0.9"/><line x1="7.3" y1="0.2" x2="7.3" y2="19.6" stroke="#cfcfcf" stroke-width="2.4"/><line x1="7.3" y1="0.6" x2="7.3" y2="19.4" stroke="#2a2a2a" stroke-width="0.9" stroke-dasharray="3 1.6"/><polyline points="2,5.2 12.8,2.8 12.8,13.2 2,16.6" fill="none" stroke="#c4c4c4" stroke-width="0.6"/></g><g transform="translate(27.40 406.60) scale(1)"><g stroke="#d8d8d8" stroke-width="2.8" fill="#d8d8d8" stroke-linejoin="round"><line x1="3" y1="4" x2="3" y2="15.8"/><line x1="3" y1="15.8" x2="16" y2="15.8"/><polygon points="3,0.6 0.6,5 5.4,5"/><polygon points="18.6,15.8 14.6,13.6 14.6,18"/></g><g stroke="#0c0c0c" stroke-width="1.3" fill="#0c0c0c"><line x1="3" y1="4" x2="3" y2="15.8"/><line x1="3" y1="15.8" x2="16" y2="15.8"/><polygon points="3,1 1,5 5,5"/><polygon points="18.2,15.8 14.6,13.8 14.6,17.8"/><rect x="1.4" y="14.2" width="3.2" height="3.2"/></g></g><g transform="translate(27.60 431.20) scale(0.96)"><polygon points="5,2.8 9.7,1.2 13.6,3 13.6,8.3 18.2,10.2 18.2,16.3 12,19.4 0.8,12.4 0.8,7.6 5,6" fill="#eebc0c" stroke="#8e8e8e" stroke-width="2.6" stroke-linejoin="round"/><polygon points="5,2.8 9.7,1.2 13.6,3 13.6,8.3 18.2,10.2 18.2,16.3 12,19.4 0.8,12.4 0.8,7.6 5,6" fill="#f2c414" stroke="#6e4c00" stroke-width="0.8" stroke-linejoin="round"/><polygon points="5,2.8 9.7,1.2 13.6,3 8.9,4.8" fill="#fff2a8" stroke="#8a6400" stroke-width="0.5"/><polygon points="8.9,4.8 13.6,3 13.6,8.3 8.9,10.2" fill="#ffe562" stroke="#8a6400" stroke-width="0.5"/><polygon points="8.9,10.2 13.6,8.3 18.2,10.2 13.4,12.3" fill="#fff2a8" stroke="#8a6400" stroke-width="0.5"/><polygon points="13.4,12.3 18.2,10.2 18.2,16.3 12.4,19.2" fill="#ffe562" stroke="#8a6400" stroke-width="0.5"/><polygon points="0.8,7.6 5,6 5,2.8 8.9,4.8 8.9,10.2 13.4,12.3 12.4,19.2 0.8,12.4" fill="#f0bf10" stroke="none"/><polyline points="8.9,4.8 8.9,10.2 13.4,12.3 12.2,19.2" fill="none" stroke="#8a6400" stroke-width="0.5"/><circle cx="3.2" cy="8.6" r="0.9" fill="#fff6c0"/></g><g transform="translate(27.60 455.20) scale(0.96)"><polygon points="5,2.8 9.7,1.2 13.6,3 13.6,8.3 18.2,10.2 18.2,16.3 12,19.4 0.8,12.4 0.8,7.6 5,6" fill="#eebc0c" stroke="#8e8e8e" stroke-width="2.6" stroke-linejoin="round"/><polygon points="5,2.8 9.7,1.2 13.6,3 13.6,8.3 18.2,10.2 18.2,16.3 12,19.4 0.8,12.4 0.8,7.6 5,6" fill="#f2c414" stroke="#6e4c00" stroke-width="0.8" stroke-linejoin="round"/><polygon points="5,2.8 9.7,1.2 13.6,3 8.9,4.8" fill="#fff2a8" stroke="#8a6400" stroke-width="0.5"/><polygon points="8.9,4.8 13.6,3 13.6,8.3 8.9,10.2" fill="#ffe562" stroke="#8a6400" stroke-width="0.5"/><polygon points="8.9,10.2 13.6,8.3 18.2,10.2 13.4,12.3" fill="#fff2a8" stroke="#8a6400" stroke-width="0.5"/><polygon points="13.4,12.3 18.2,10.2 18.2,16.3 12.4,19.2" fill="#ffe562" stroke="#8a6400" stroke-width="0.5"/><polygon points="0.8,7.6 5,6 5,2.8 8.9,4.8 8.9,10.2 13.4,12.3 12.4,19.2 0.8,12.4" fill="#f0bf10" stroke="none"/><polyline points="8.9,4.8 8.9,10.2 13.4,12.3 12.2,19.2" fill="none" stroke="#8a6400" stroke-width="0.5"/><circle cx="3.2" cy="8.6" r="0.9" fill="#fff6c0"/></g><g transform="translate(27.60 479.20) scale(0.96)"><polygon points="5,2.8 9.7,1.2 13.6,3 13.6,8.3 18.2,10.2 18.2,16.3 12,19.4 0.8,12.4 0.8,7.6 5,6" fill="#eebc0c" stroke="#8e8e8e" stroke-width="2.6" stroke-linejoin="round"/><polygon points="5,2.8 9.7,1.2 13.6,3 13.6,8.3 18.2,10.2 18.2,16.3 12,19.4 0.8,12.4 0.8,7.6 5,6" fill="#f2c414" stroke="#6e4c00" stroke-width="0.8" stroke-linejoin="round"/><polygon points="5,2.8 9.7,1.2 13.6,3 8.9,4.8" fill="#fff2a8" stroke="#8a6400" stroke-width="0.5"/><polygon points="8.9,4.8 13.6,3 13.6,8.3 8.9,10.2" fill="#ffe562" stroke="#8a6400" stroke-width="0.5"/><polygon points="8.9,10.2 13.6,8.3 18.2,10.2 13.4,12.3" fill="#fff2a8" stroke="#8a6400" stroke-width="0.5"/><polygon points="13.4,12.3 18.2,10.2 18.2,16.3 12.4,19.2" fill="#ffe562" stroke="#8a6400" stroke-width="0.5"/><polygon points="0.8,7.6 5,6 5,2.8 8.9,4.8 8.9,10.2 13.4,12.3 12.4,19.2 0.8,12.4" fill="#f0bf10" stroke="none"/><polyline points="8.9,4.8 8.9,10.2 13.4,12.3 12.2,19.2" fill="none" stroke="#8a6400" stroke-width="0.5"/><circle cx="3.2" cy="8.6" r="0.9" fill="#fff6c0"/></g><g transform="translate(27.60 503.20) scale(0.96)"><polygon points="5,2.8 9.7,1.2 13.6,3 13.6,8.3 18.2,10.2 18.2,16.3 12,19.4 0.8,12.4 0.8,7.6 5,6" fill="#eebc0c" stroke="#8e8e8e" stroke-width="2.6" stroke-linejoin="round"/><polygon points="5,2.8 9.7,1.2 13.6,3 13.6,8.3 18.2,10.2 18.2,16.3 12,19.4 0.8,12.4 0.8,7.6 5,6" fill="#f2c414" stroke="#6e4c00" stroke-width="0.8" stroke-linejoin="round"/><polygon points="5,2.8 9.7,1.2 13.6,3 8.9,4.8" fill="#fff2a8" stroke="#8a6400" stroke-width="0.5"/><polygon points="8.9,4.8 13.6,3 13.6,8.3 8.9,10.2" fill="#ffe562" stroke="#8a6400" stroke-width="0.5"/><polygon points="8.9,10.2 13.6,8.3 18.2,10.2 13.4,12.3" fill="#fff2a8" stroke="#8a6400" stroke-width="0.5"/><polygon points="13.4,12.3 18.2,10.2 18.2,16.3 12.4,19.2" fill="#ffe562" stroke="#8a6400" stroke-width="0.5"/><polygon points="0.8,7.6 5,6 5,2.8 8.9,4.8 8.9,10.2 13.4,12.3 12.4,19.2 0.8,12.4" fill="#f0bf10" stroke="none"/><polyline points="8.9,4.8 8.9,10.2 13.4,12.3 12.2,19.2" fill="none" stroke="#8a6400" stroke-width="0.5"/><circle cx="3.2" cy="8.6" r="0.9" fill="#fff6c0"/></g><g transform="translate(27.60 527.20) scale(0.96)"><polygon points="5,2.8 9.7,1.2 13.6,3 13.6,8.3 18.2,10.2 18.2,16.3 12,19.4 0.8,12.4 0.8,7.6 5,6" fill="#eebc0c" stroke="#8e8e8e" stroke-width="2.6" stroke-linejoin="round"/><polygon points="5,2.8 9.7,1.2 13.6,3 13.6,8.3 18.2,10.2 18.2,16.3 12,19.4 0.8,12.4 0.8,7.6 5,6" fill="#f2c414" stroke="#6e4c00" stroke-width="0.8" stroke-linejoin="round"/><polygon points="5,2.8 9.7,1.2 13.6,3 8.9,4.8" fill="#fff2a8" stroke="#8a6400" stroke-width="0.5"/><polygon points="8.9,4.8 13.6,3 13.6,8.3 8.9,10.2" fill="#ffe562" stroke="#8a6400" stroke-width="0.5"/><polygon points="8.9,10.2 13.6,8.3 18.2,10.2 13.4,12.3" fill="#fff2a8" stroke="#8a6400" stroke-width="0.5"/><polygon points="13.4,12.3 18.2,10.2 18.2,16.3 12.4,19.2" fill="#ffe562" stroke="#8a6400" stroke-width="0.5"/><polygon points="0.8,7.6 5,6 5,2.8 8.9,4.8 8.9,10.2 13.4,12.3 12.4,19.2 0.8,12.4" fill="#f0bf10" stroke="none"/><polyline points="8.9,4.8 8.9,10.2 13.4,12.3 12.2,19.2" fill="none" stroke="#8a6400" stroke-width="0.5"/><circle cx="3.2" cy="8.6" r="0.9" fill="#fff6c0"/></g><g transform="translate(27.60 551.20) scale(0.96)"><polygon points="5,2.8 9.7,1.2 13.6,3 13.6,8.3 18.2,10.2 18.2,16.3 12,19.4 0.8,12.4 0.8,7.6 5,6" fill="#eebc0c" stroke="#8e8e8e" stroke-width="2.6" stroke-linejoin="round"/><polygon points="5,2.8 9.7,1.2 13.6,3 13.6,8.3 18.2,10.2 18.2,16.3 12,19.4 0.8,12.4 0.8,7.6 5,6" fill="#f2c414" stroke="#6e4c00" stroke-width="0.8" stroke-linejoin="round"/><polygon points="5,2.8 9.7,1.2 13.6,3 8.9,4.8" fill="#fff2a8" stroke="#8a6400" stroke-width="0.5"/><polygon points="8.9,4.8 13.6,3 13.6,8.3 8.9,10.2" fill="#ffe562" stroke="#8a6400" stroke-width="0.5"/><polygon points="8.9,10.2 13.6,8.3 18.2,10.2 13.4,12.3" fill="#fff2a8" stroke="#8a6400" stroke-width="0.5"/><polygon points="13.4,12.3 18.2,10.2 18.2,16.3 12.4,19.2" fill="#ffe562" stroke="#8a6400" stroke-width="0.5"/><polygon points="0.8,7.6 5,6 5,2.8 8.9,4.8 8.9,10.2 13.4,12.3 12.4,19.2 0.8,12.4" fill="#f0bf10" stroke="none"/><polyline points="8.9,4.8 8.9,10.2 13.4,12.3 12.2,19.2" fill="none" stroke="#8a6400" stroke-width="0.5"/><circle cx="3.2" cy="8.6" r="0.9" fill="#fff6c0"/></g><g transform="translate(27.60 575.20) scale(0.96)"><polygon points="5,2.8 9.7,1.2 13.6,3 13.6,8.3 18.2,10.2 18.2,16.3 12,19.4 0.8,12.4 0.8,7.6 5,6" fill="#eebc0c" stroke="#8e8e8e" stroke-width="2.6" stroke-linejoin="round"/><polygon points="5,2.8 9.7,1.2 13.6,3 13.6,8.3 18.2,10.2 18.2,16.3 12,19.4 0.8,12.4 0.8,7.6 5,6" fill="#f2c414" stroke="#6e4c00" stroke-width="0.8" stroke-linejoin="round"/><polygon points="5,2.8 9.7,1.2 13.6,3 8.9,4.8" fill="#fff2a8" stroke="#8a6400" stroke-width="0.5"/><polygon points="8.9,4.8 13.6,3 13.6,8.3 8.9,10.2" fill="#ffe562" stroke="#8a6400" stroke-width="0.5"/><polygon points="8.9,10.2 13.6,8.3 18.2,10.2 13.4,12.3" fill="#fff2a8" stroke="#8a6400" stroke-width="0.5"/><polygon points="13.4,12.3 18.2,10.2 18.2,16.3 12.4,19.2" fill="#ffe562" stroke="#8a6400" stroke-width="0.5"/><polygon points="0.8,7.6 5,6 5,2.8 8.9,4.8 8.9,10.2 13.4,12.3 12.4,19.2 0.8,12.4" fill="#f0bf10" stroke="none"/><polyline points="8.9,4.8 8.9,10.2 13.4,12.3 12.2,19.2" fill="none" stroke="#8a6400" stroke-width="0.5"/><circle cx="3.2" cy="8.6" r="0.9" fill="#fff6c0"/></g><g transform="translate(27.60 599.20) scale(0.96)"><polygon points="5,2.8 9.7,1.2 13.6,3 13.6,8.3 18.2,10.2 18.2,16.3 12,19.4 0.8,12.4 0.8,7.6 5,6" fill="#eebc0c" stroke="#8e8e8e" stroke-width="2.6" stroke-linejoin="round"/><polygon points="5,2.8 9.7,1.2 13.6,3 13.6,8.3 18.2,10.2 18.2,16.3 12,19.4 0.8,12.4 0.8,7.6 5,6" fill="#f2c414" stroke="#6e4c00" stroke-width="0.8" stroke-linejoin="round"/><polygon points="5,2.8 9.7,1.2 13.6,3 8.9,4.8" fill="#fff2a8" stroke="#8a6400" stroke-width="0.5"/><polygon points="8.9,4.8 13.6,3 13.6,8.3 8.9,10.2" fill="#ffe562" stroke="#8a6400" stroke-width="0.5"/><polygon points="8.9,10.2 13.6,8.3 18.2,10.2 13.4,12.3" fill="#fff2a8" stroke="#8a6400" stroke-width="0.5"/><polygon points="13.4,12.3 18.2,10.2 18.2,16.3 12.4,19.2" fill="#ffe562" stroke="#8a6400" stroke-width="0.5"/><polygon points="0.8,7.6 5,6 5,2.8 8.9,4.8 8.9,10.2 13.4,12.3 12.4,19.2 0.8,12.4" fill="#f0bf10" stroke="none"/><polyline points="8.9,4.8 8.9,10.2 13.4,12.3 12.2,19.2" fill="none" stroke="#8a6400" stroke-width="0.5"/><circle cx="3.2" cy="8.6" r="0.9" fill="#fff6c0"/></g><g transform="translate(27.60 623.20) scale(0.96)"><polygon points="5,2.8 9.7,1.2 13.6,3 13.6,8.3 18.2,10.2 18.2,16.3 12,19.4 0.8,12.4 0.8,7.6 5,6" fill="#eebc0c" stroke="#8e8e8e" stroke-width="2.6" stroke-linejoin="round"/><polygon points="5,2.8 9.7,1.2 13.6,3 13.6,8.3 18.2,10.2 18.2,16.3 12,19.4 0.8,12.4 0.8,7.6 5,6" fill="#f2c414" stroke="#6e4c00" stroke-width="0.8" stroke-linejoin="round"/><polygon points="5,2.8 9.7,1.2 13.6,3 8.9,4.8" fill="#fff2a8" stroke="#8a6400" stroke-width="0.5"/><polygon points="8.9,4.8 13.6,3 13.6,8.3 8.9,10.2" fill="#ffe562" stroke="#8a6400" stroke-width="0.5"/><polygon points="8.9,10.2 13.6,8.3 18.2,10.2 13.4,12.3" fill="#fff2a8" stroke="#8a6400" stroke-width="0.5"/><polygon points="13.4,12.3 18.2,10.2 18.2,16.3 12.4,19.2" fill="#ffe562" stroke="#8a6400" stroke-width="0.5"/><polygon points="0.8,7.6 5,6 5,2.8 8.9,4.8 8.9,10.2 13.4,12.3 12.4,19.2 0.8,12.4" fill="#f0bf10" stroke="none"/><polyline points="8.9,4.8 8.9,10.2 13.4,12.3 12.2,19.2" fill="none" stroke="#8a6400" stroke-width="0.5"/><circle cx="3.2" cy="8.6" r="0.9" fill="#fff6c0"/></g><g transform="translate(27.60 647.20) scale(0.96)"><polygon points="5,2.8 9.7,1.2 13.6,3 13.6,8.3 18.2,10.2 18.2,16.3 12,19.4 0.8,12.4 0.8,7.6 5,6" fill="#eebc0c" stroke="#8e8e8e" stroke-width="2.6" stroke-linejoin="round"/><polygon points="5,2.8 9.7,1.2 13.6,3 13.6,8.3 18.2,10.2 18.2,16.3 12,19.4 0.8,12.4 0.8,7.6 5,6" fill="#f2c414" stroke="#6e4c00" stroke-width="0.8" stroke-linejoin="round"/><polygon points="5,2.8 9.7,1.2 13.6,3 8.9,4.8" fill="#fff2a8" stroke="#8a6400" stroke-width="0.5"/><polygon points="8.9,4.8 13.6,3 13.6,8.3 8.9,10.2" fill="#ffe562" stroke="#8a6400" stroke-width="0.5"/><polygon points="8.9,10.2 13.6,8.3 18.2,10.2 13.4,12.3" fill="#fff2a8" stroke="#8a6400" stroke-width="0.5"/><polygon points="13.4,12.3 18.2,10.2 18.2,16.3 12.4,19.2" fill="#ffe562" stroke="#8a6400" stroke-width="0.5"/><polygon points="0.8,7.6 5,6 5,2.8 8.9,4.8 8.9,10.2 13.4,12.3 12.4,19.2 0.8,12.4" fill="#f0bf10" stroke="none"/><polyline points="8.9,4.8 8.9,10.2 13.4,12.3 12.2,19.2" fill="none" stroke="#8a6400" stroke-width="0.5"/><circle cx="3.2" cy="8.6" r="0.9" fill="#fff6c0"/></g><g transform="translate(27.60 671.20) scale(0.96)"><polygon points="5,2.8 9.7,1.2 13.6,3 13.6,8.3 18.2,10.2 18.2,16.3 12,19.4 0.8,12.4 0.8,7.6 5,6" fill="#eebc0c" stroke="#8e8e8e" stroke-width="2.6" stroke-linejoin="round"/><polygon points="5,2.8 9.7,1.2 13.6,3 13.6,8.3 18.2,10.2 18.2,16.3 12,19.4 0.8,12.4 0.8,7.6 5,6" fill="#f2c414" stroke="#6e4c00" stroke-width="0.8" stroke-linejoin="round"/><polygon points="5,2.8 9.7,1.2 13.6,3 8.9,4.8" fill="#fff2a8" stroke="#8a6400" stroke-width="0.5"/><polygon points="8.9,4.8 13.6,3 13.6,8.3 8.9,10.2" fill="#ffe562" stroke="#8a6400" stroke-width="0.5"/><polygon points="8.9,10.2 13.6,8.3 18.2,10.2 13.4,12.3" fill="#fff2a8" stroke="#8a6400" stroke-width="0.5"/><polygon points="13.4,12.3 18.2,10.2 18.2,16.3 12.4,19.2" fill="#ffe562" stroke="#8a6400" stroke-width="0.5"/><polygon points="0.8,7.6 5,6 5,2.8 8.9,4.8 8.9,10.2 13.4,12.3 12.4,19.2 0.8,12.4" fill="#f0bf10" stroke="none"/><polyline points="8.9,4.8 8.9,10.2 13.4,12.3 12.2,19.2" fill="none" stroke="#8a6400" stroke-width="0.5"/><circle cx="3.2" cy="8.6" r="0.9" fill="#fff6c0"/></g><g transform="translate(27.60 695.20) scale(0.96)"><polygon points="5,2.8 9.7,1.2 13.6,3 13.6,8.3 18.2,10.2 18.2,16.3 12,19.4 0.8,12.4 0.8,7.6 5,6" fill="#eebc0c" stroke="#8e8e8e" stroke-width="2.6" stroke-linejoin="round"/><polygon points="5,2.8 9.7,1.2 13.6,3 13.6,8.3 18.2,10.2 18.2,16.3 12,19.4 0.8,12.4 0.8,7.6 5,6" fill="#f2c414" stroke="#6e4c00" stroke-width="0.8" stroke-linejoin="round"/><polygon points="5,2.8 9.7,1.2 13.6,3 8.9,4.8" fill="#fff2a8" stroke="#8a6400" stroke-width="0.5"/><polygon points="8.9,4.8 13.6,3 13.6,8.3 8.9,10.2" fill="#ffe562" stroke="#8a6400" stroke-width="0.5"/><polygon points="8.9,10.2 13.6,8.3 18.2,10.2 13.4,12.3" fill="#fff2a8" stroke="#8a6400" stroke-width="0.5"/><polygon points="13.4,12.3 18.2,10.2 18.2,16.3 12.4,19.2" fill="#ffe562" stroke="#8a6400" stroke-width="0.5"/><polygon points="0.8,7.6 5,6 5,2.8 8.9,4.8 8.9,10.2 13.4,12.3 12.4,19.2 0.8,12.4" fill="#f0bf10" stroke="none"/><polyline points="8.9,4.8 8.9,10.2 13.4,12.3 12.2,19.2" fill="none" stroke="#8a6400" stroke-width="0.5"/><circle cx="3.2" cy="8.6" r="0.9" fill="#fff6c0"/></g><g transform="translate(27.60 719.20) scale(0.96)"><polygon points="5,2.8 9.7,1.2 13.6,3 13.6,8.3 18.2,10.2 18.2,16.3 12,19.4 0.8,12.4 0.8,7.6 5,6" fill="#eebc0c" stroke="#8e8e8e" stroke-width="2.6" stroke-linejoin="round"/><polygon points="5,2.8 9.7,1.2 13.6,3 13.6,8.3 18.2,10.2 18.2,16.3 12,19.4 0.8,12.4 0.8,7.6 5,6" fill="#f2c414" stroke="#6e4c00" stroke-width="0.8" stroke-linejoin="round"/><polygon points="5,2.8 9.7,1.2 13.6,3 8.9,4.8" fill="#fff2a8" stroke="#8a6400" stroke-width="0.5"/><polygon points="8.9,4.8 13.6,3 13.6,8.3 8.9,10.2" fill="#ffe562" stroke="#8a6400" stroke-width="0.5"/><polygon points="8.9,10.2 13.6,8.3 18.2,10.2 13.4,12.3" fill="#fff2a8" stroke="#8a6400" stroke-width="0.5"/><polygon points="13.4,12.3 18.2,10.2 18.2,16.3 12.4,19.2" fill="#ffe562" stroke="#8a6400" stroke-width="0.5"/><polygon points="0.8,7.6 5,6 5,2.8 8.9,4.8 8.9,10.2 13.4,12.3 12.4,19.2 0.8,12.4" fill="#f0bf10" stroke="none"/><polyline points="8.9,4.8 8.9,10.2 13.4,12.3 12.2,19.2" fill="none" stroke="#8a6400" stroke-width="0.5"/><circle cx="3.2" cy="8.6" r="0.9" fill="#fff6c0"/></g><g transform="translate(27.60 743.20) scale(0.96)"><polygon points="5,2.8 9.7,1.2 13.6,3 13.6,8.3 18.2,10.2 18.2,16.3 12,19.4 0.8,12.4 0.8,7.6 5,6" fill="#eebc0c" stroke="#8e8e8e" stroke-width="2.6" stroke-linejoin="round"/><polygon points="5,2.8 9.7,1.2 13.6,3 13.6,8.3 18.2,10.2 18.2,16.3 12,19.4 0.8,12.4 0.8,7.6 5,6" fill="#f2c414" stroke="#6e4c00" stroke-width="0.8" stroke-linejoin="round"/><polygon points="5,2.8 9.7,1.2 13.6,3 8.9,4.8" fill="#fff2a8" stroke="#8a6400" stroke-width="0.5"/><polygon points="8.9,4.8 13.6,3 13.6,8.3 8.9,10.2" fill="#ffe562" stroke="#8a6400" stroke-width="0.5"/><polygon points="8.9,10.2 13.6,8.3 18.2,10.2 13.4,12.3" fill="#fff2a8" stroke="#8a6400" stroke-width="0.5"/><polygon points="13.4,12.3 18.2,10.2 18.2,16.3 12.4,19.2" fill="#ffe562" stroke="#8a6400" stroke-width="0.5"/><polygon points="0.8,7.6 5,6 5,2.8 8.9,4.8 8.9,10.2 13.4,12.3 12.4,19.2 0.8,12.4" fill="#f0bf10" stroke="none"/><polyline points="8.9,4.8 8.9,10.2 13.4,12.3 12.2,19.2" fill="none" stroke="#8a6400" stroke-width="0.5"/><circle cx="3.2" cy="8.6" r="0.9" fill="#fff6c0"/></g><g transform="translate(27.60 767.20) scale(0.96)"><polygon points="5,2.8 9.7,1.2 13.6,3 13.6,8.3 18.2,10.2 18.2,16.3 12,19.4 0.8,12.4 0.8,7.6 5,6" fill="#eebc0c" stroke="#8e8e8e" stroke-width="2.6" stroke-linejoin="round"/><polygon points="5,2.8 9.7,1.2 13.6,3 13.6,8.3 18.2,10.2 18.2,16.3 12,19.4 0.8,12.4 0.8,7.6 5,6" fill="#f2c414" stroke="#6e4c00" stroke-width="0.8" stroke-linejoin="round"/><polygon points="5,2.8 9.7,1.2 13.6,3 8.9,4.8" fill="#fff2a8" stroke="#8a6400" stroke-width="0.5"/><polygon points="8.9,4.8 13.6,3 13.6,8.3 8.9,10.2" fill="#ffe562" stroke="#8a6400" stroke-width="0.5"/><polygon points="8.9,10.2 13.6,8.3 18.2,10.2 13.4,12.3" fill="#fff2a8" stroke="#8a6400" stroke-width="0.5"/><polygon points="13.4,12.3 18.2,10.2 18.2,16.3 12.4,19.2" fill="#ffe562" stroke="#8a6400" stroke-width="0.5"/><polygon points="0.8,7.6 5,6 5,2.8 8.9,4.8 8.9,10.2 13.4,12.3 12.4,19.2 0.8,12.4" fill="#f0bf10" stroke="none"/><polyline points="8.9,4.8 8.9,10.2 13.4,12.3 12.2,19.2" fill="none" stroke="#8a6400" stroke-width="0.5"/><circle cx="3.2" cy="8.6" r="0.9" fill="#fff6c0"/></g><g transform="translate(27.60 791.20) scale(0.96)"><polygon points="5,2.8 9.7,1.2 13.6,3 13.6,8.3 18.2,10.2 18.2,16.3 12,19.4 0.8,12.4 0.8,7.6 5,6" fill="#eebc0c" stroke="#8e8e8e" stroke-width="2.6" stroke-linejoin="round"/><polygon points="5,2.8 9.7,1.2 13.6,3 13.6,8.3 18.2,10.2 18.2,16.3 12,19.4 0.8,12.4 0.8,7.6 5,6" fill="#f2c414" stroke="#6e4c00" stroke-width="0.8" stroke-linejoin="round"/><polygon points="5,2.8 9.7,1.2 13.6,3 8.9,4.8" fill="#fff2a8" stroke="#8a6400" stroke-width="0.5"/><polygon points="8.9,4.8 13.6,3 13.6,8.3 8.9,10.2" fill="#ffe562" stroke="#8a6400" stroke-width="0.5"/><polygon points="8.9,10.2 13.6,8.3 18.2,10.2 13.4,12.3" fill="#fff2a8" stroke="#8a6400" stroke-width="0.5"/><polygon points="13.4,12.3 18.2,10.2 18.2,16.3 12.4,19.2" fill="#ffe562" stroke="#8a6400" stroke-width="0.5"/><polygon points="0.8,7.6 5,6 5,2.8 8.9,4.8 8.9,10.2 13.4,12.3 12.4,19.2 0.8,12.4" fill="#f0bf10" stroke="none"/><polyline points="8.9,4.8 8.9,10.2 13.4,12.3 12.2,19.2" fill="none" stroke="#8a6400" stroke-width="0.5"/><circle cx="3.2" cy="8.6" r="0.9" fill="#fff6c0"/></g><g transform="translate(27.60 815.20) scale(0.96)"><polygon points="5,2.8 9.7,1.2 13.6,3 13.6,8.3 18.2,10.2 18.2,16.3 12,19.4 0.8,12.4 0.8,7.6 5,6" fill="#eebc0c" stroke="#8e8e8e" stroke-width="2.6" stroke-linejoin="round"/><polygon points="5,2.8 9.7,1.2 13.6,3 13.6,8.3 18.2,10.2 18.2,16.3 12,19.4 0.8,12.4 0.8,7.6 5,6" fill="#f2c414" stroke="#6e4c00" stroke-width="0.8" stroke-linejoin="round"/><polygon points="5,2.8 9.7,1.2 13.6,3 8.9,4.8" fill="#fff2a8" stroke="#8a6400" stroke-width="0.5"/><polygon points="8.9,4.8 13.6,3 13.6,8.3 8.9,10.2" fill="#ffe562" stroke="#8a6400" stroke-width="0.5"/><polygon points="8.9,10.2 13.6,8.3 18.2,10.2 13.4,12.3" fill="#fff2a8" stroke="#8a6400" stroke-width="0.5"/><polygon points="13.4,12.3 18.2,10.2 18.2,16.3 12.4,19.2" fill="#ffe562" stroke="#8a6400" stroke-width="0.5"/><polygon points="0.8,7.6 5,6 5,2.8 8.9,4.8 8.9,10.2 13.4,12.3 12.4,19.2 0.8,12.4" fill="#f0bf10" stroke="none"/><polyline points="8.9,4.8 8.9,10.2 13.4,12.3 12.2,19.2" fill="none" stroke="#8a6400" stroke-width="0.5"/><circle cx="3.2" cy="8.6" r="0.9" fill="#fff6c0"/></g><g transform="translate(27.60 839.20) scale(0.96)"><polygon points="5,2.8 9.7,1.2 13.6,3 13.6,8.3 18.2,10.2 18.2,16.3 12,19.4 0.8,12.4 0.8,7.6 5,6" fill="#eebc0c" stroke="#8e8e8e" stroke-width="2.6" stroke-linejoin="round"/><polygon points="5,2.8 9.7,1.2 13.6,3 13.6,8.3 18.2,10.2 18.2,16.3 12,19.4 0.8,12.4 0.8,7.6 5,6" fill="#f2c414" stroke="#6e4c00" stroke-width="0.8" stroke-linejoin="round"/><polygon points="5,2.8 9.7,1.2 13.6,3 8.9,4.8" fill="#fff2a8" stroke="#8a6400" stroke-width="0.5"/><polygon points="8.9,4.8 13.6,3 13.6,8.3 8.9,10.2" fill="#ffe562" stroke="#8a6400" stroke-width="0.5"/><polygon points="8.9,10.2 13.6,8.3 18.2,10.2 13.4,12.3" fill="#fff2a8" stroke="#8a6400" stroke-width="0.5"/><polygon points="13.4,12.3 18.2,10.2 18.2,16.3 12.4,19.2" fill="#ffe562" stroke="#8a6400" stroke-width="0.5"/><polygon points="0.8,7.6 5,6 5,2.8 8.9,4.8 8.9,10.2 13.4,12.3 12.4,19.2 0.8,12.4" fill="#f0bf10" stroke="none"/><polyline points="8.9,4.8 8.9,10.2 13.4,12.3 12.2,19.2" fill="none" stroke="#8a6400" stroke-width="0.5"/><circle cx="3.2" cy="8.6" r="0.9" fill="#fff6c0"/></g><g transform="translate(27.60 863.20) scale(0.96)"><polygon points="5,2.8 9.7,1.2 13.6,3 13.6,8.3 18.2,10.2 18.2,16.3 12,19.4 0.8,12.4 0.8,7.6 5,6" fill="#eebc0c" stroke="#8e8e8e" stroke-width="2.6" stroke-linejoin="round"/><polygon points="5,2.8 9.7,1.2 13.6,3 13.6,8.3 18.2,10.2 18.2,16.3 12,19.4 0.8,12.4 0.8,7.6 5,6" fill="#f2c414" stroke="#6e4c00" stroke-width="0.8" stroke-linejoin="round"/><polygon points="5,2.8 9.7,1.2 13.6,3 8.9,4.8" fill="#fff2a8" stroke="#8a6400" stroke-width="0.5"/><polygon points="8.9,4.8 13.6,3 13.6,8.3 8.9,10.2" fill="#ffe562" stroke="#8a6400" stroke-width="0.5"/><polygon points="8.9,10.2 13.6,8.3 18.2,10.2 13.4,12.3" fill="#fff2a8" stroke="#8a6400" stroke-width="0.5"/><polygon points="13.4,12.3 18.2,10.2 18.2,16.3 12.4,19.2" fill="#ffe562" stroke="#8a6400" stroke-width="0.5"/><polygon points="0.8,7.6 5,6 5,2.8 8.9,4.8 8.9,10.2 13.4,12.3 12.4,19.2 0.8,12.4" fill="#f0bf10" stroke="none"/><polyline points="8.9,4.8 8.9,10.2 13.4,12.3 12.2,19.2" fill="none" stroke="#8a6400" stroke-width="0.5"/><circle cx="3.2" cy="8.6" r="0.9" fill="#fff6c0"/></g><g transform="translate(50.10 433.10) scale(1)"><polygon points="4.8,7 15.4,6.4 15,10.8 10,12.4 5.4,11.4" fill="#2a78a2"/><polygon points="0,4.2 10.2,0 19.9,3.8 9.3,8.2" fill="#55a9d2" stroke="#2a7298" stroke-width="0.5"/><polygon points="0,4.2 9.3,8.2 19.9,3.8 19.9,4.9 9.3,9.3 0,5.3" fill="#2a7298"/><path d="M4.2,8.4 C3.2,10.6 2.8,12.6 2.2,15.4" fill="none" stroke="#c4c4c4" stroke-width="2.6" stroke-linecap="round"/><path d="M9.8,4.3 C6,4.8 4.6,6.8 3.8,9.4 C3.2,11.4 2.8,13 2.2,15.4" fill="none" stroke="#0c0c0c" stroke-width="1.2" stroke-linecap="round"/><circle cx="3.5" cy="10" r="0.7" fill="#f0f0f0"/></g><g transform="translate(50.10 481.10) scale(1)"><polygon points="4.8,7 15.4,6.4 15,10.8 10,12.4 5.4,11.4" fill="#2a78a2"/><polygon points="0,4.2 10.2,0 19.9,3.8 9.3,8.2" fill="#55a9d2" stroke="#2a7298" stroke-width="0.5"/><polygon points="0,4.2 9.3,8.2 19.9,3.8 19.9,4.9 9.3,9.3 0,5.3" fill="#2a7298"/><path d="M4.2,8.4 C3.2,10.6 2.8,12.6 2.2,15.4" fill="none" stroke="#c4c4c4" stroke-width="2.6" stroke-linecap="round"/><path d="M9.8,4.3 C6,4.8 4.6,6.8 3.8,9.4 C3.2,11.4 2.8,13 2.2,15.4" fill="none" stroke="#0c0c0c" stroke-width="1.2" stroke-linecap="round"/><circle cx="3.5" cy="10" r="0.7" fill="#f0f0f0"/></g><g transform="translate(50.10 649.10) scale(1)"><polygon points="4.8,7 15.4,6.4 15,10.8 10,12.4 5.4,11.4" fill="#2a78a2"/><polygon points="0,4.2 10.2,0 19.9,3.8 9.3,8.2" fill="#55a9d2" stroke="#2a7298" stroke-width="0.5"/><polygon points="0,4.2 9.3,8.2 19.9,3.8 19.9,4.9 9.3,9.3 0,5.3" fill="#2a7298"/><path d="M4.2,8.4 C3.2,10.6 2.8,12.6 2.2,15.4" fill="none" stroke="#c4c4c4" stroke-width="2.6" stroke-linecap="round"/><path d="M9.8,4.3 C6,4.8 4.6,6.8 3.8,9.4 C3.2,11.4 2.8,13 2.2,15.4" fill="none" stroke="#0c0c0c" stroke-width="1.2" stroke-linecap="round"/><circle cx="3.5" cy="10" r="0.7" fill="#f0f0f0"/></g><g transform="translate(50.10 673.10) scale(1)"><polygon points="4.8,7 15.4,6.4 15,10.8 10,12.4 5.4,11.4" fill="#2a78a2"/><polygon points="0,4.2 10.2,0 19.9,3.8 9.3,8.2" fill="#55a9d2" stroke="#2a7298" stroke-width="0.5"/><polygon points="0,4.2 9.3,8.2 19.9,3.8 19.9,4.9 9.3,9.3 0,5.3" fill="#2a7298"/><path d="M4.2,8.4 C3.2,10.6 2.8,12.6 2.2,15.4" fill="none" stroke="#c4c4c4" stroke-width="2.6" stroke-linecap="round"/><path d="M9.8,4.3 C6,4.8 4.6,6.8 3.8,9.4 C3.2,11.4 2.8,13 2.2,15.4" fill="none" stroke="#0c0c0c" stroke-width="1.2" stroke-linecap="round"/><circle cx="3.5" cy="10" r="0.7" fill="#f0f0f0"/></g><g transform="translate(50.10 697.10) scale(1)"><polygon points="4.8,7 15.4,6.4 15,10.8 10,12.4 5.4,11.4" fill="#2a78a2"/><polygon points="0,4.2 10.2,0 19.9,3.8 9.3,8.2" fill="#55a9d2" stroke="#2a7298" stroke-width="0.5"/><polygon points="0,4.2 9.3,8.2 19.9,3.8 19.9,4.9 9.3,9.3 0,5.3" fill="#2a7298"/><path d="M4.2,8.4 C3.2,10.6 2.8,12.6 2.2,15.4" fill="none" stroke="#c4c4c4" stroke-width="2.6" stroke-linecap="round"/><path d="M9.8,4.3 C6,4.8 4.6,6.8 3.8,9.4 C3.2,11.4 2.8,13 2.2,15.4" fill="none" stroke="#0c0c0c" stroke-width="1.2" stroke-linecap="round"/><circle cx="3.5" cy="10" r="0.7" fill="#f0f0f0"/></g><g transform="translate(50.10 721.10) scale(1)"><polygon points="4.8,7 15.4,6.4 15,10.8 10,12.4 5.4,11.4" fill="#2a78a2"/><polygon points="0,4.2 10.2,0 19.9,3.8 9.3,8.2" fill="#55a9d2" stroke="#2a7298" stroke-width="0.5"/><polygon points="0,4.2 9.3,8.2 19.9,3.8 19.9,4.9 9.3,9.3 0,5.3" fill="#2a7298"/><path d="M4.2,8.4 C3.2,10.6 2.8,12.6 2.2,15.4" fill="none" stroke="#c4c4c4" stroke-width="2.6" stroke-linecap="round"/><path d="M9.8,4.3 C6,4.8 4.6,6.8 3.8,9.4 C3.2,11.4 2.8,13 2.2,15.4" fill="none" stroke="#0c0c0c" stroke-width="1.2" stroke-linecap="round"/><circle cx="3.5" cy="10" r="0.7" fill="#f0f0f0"/></g><g transform="translate(50.10 841.10) scale(1)"><polygon points="4.8,7 15.4,6.4 15,10.8 10,12.4 5.4,11.4" fill="#2a78a2"/><polygon points="0,4.2 10.2,0 19.9,3.8 9.3,8.2" fill="#55a9d2" stroke="#2a7298" stroke-width="0.5"/><polygon points="0,4.2 9.3,8.2 19.9,3.8 19.9,4.9 9.3,9.3 0,5.3" fill="#2a7298"/><path d="M4.2,8.4 C3.2,10.6 2.8,12.6 2.2,15.4" fill="none" stroke="#c4c4c4" stroke-width="2.6" stroke-linecap="round"/><path d="M9.8,4.3 C6,4.8 4.6,6.8 3.8,9.4 C3.2,11.4 2.8,13 2.2,15.4" fill="none" stroke="#0c0c0c" stroke-width="1.2" stroke-linecap="round"/><circle cx="3.5" cy="10" r="0.7" fill="#f0f0f0"/></g><g transform="translate(50.10 865.10) scale(1)"><polygon points="4.8,7 15.4,6.4 15,10.8 10,12.4 5.4,11.4" fill="#2a78a2"/><polygon points="0,4.2 10.2,0 19.9,3.8 9.3,8.2" fill="#55a9d2" stroke="#2a7298" stroke-width="0.5"/><polygon points="0,4.2 9.3,8.2 19.9,3.8 19.9,4.9 9.3,9.3 0,5.3" fill="#2a7298"/><path d="M4.2,8.4 C3.2,10.6 2.8,12.6 2.2,15.4" fill="none" stroke="#c4c4c4" stroke-width="2.6" stroke-linecap="round"/><path d="M9.8,4.3 C6,4.8 4.6,6.8 3.8,9.4 C3.2,11.4 2.8,13 2.2,15.4" fill="none" stroke="#0c0c0c" stroke-width="1.2" stroke-linecap="round"/><circle cx="3.5" cy="10" r="0.7" fill="#f0f0f0"/></g><g transform="translate(30.00 888.50) scale(1)"><ellipse cx="6" cy="2.2" rx="5.6" ry="2" fill="#cfcfcf" stroke="#8a8a8a" stroke-width="0.6"/><path d="M0.6,2.6 C1.2,5.6 3,6 3.6,6.4 L8.4,6.4 C9,6 10.8,5.6 11.4,2.6 C9,4.6 3,4.6 0.6,2.6 Z" fill="#9a9a9a" stroke="#6a6a6a" stroke-width="0.4"/><rect x="3.8" y="4.6" width="4.4" height="4.4" fill="#d8d8d8"/><rect x="3.6" y="9" width="4.8" height="8.6" fill="#8a8a8a"/><g stroke="#e6e6e6" stroke-width="0.9"><line x1="3.4" y1="10" x2="8.6" y2="10"/><line x1="3.4" y1="11.9" x2="8.6" y2="11.9"/><line x1="3.4" y1="13.8" x2="8.6" y2="13.8"/><line x1="3.4" y1="15.7" x2="8.6" y2="15.7"/><line x1="3.8" y1="17.4" x2="8.2" y2="17.4"/></g></g><g transform="translate(30.00 912.50) scale(1)"><ellipse cx="6" cy="2.2" rx="5.6" ry="2" fill="#cfcfcf" stroke="#8a8a8a" stroke-width="0.6"/><path d="M0.6,2.6 C1.2,5.6 3,6 3.6,6.4 L8.4,6.4 C9,6 10.8,5.6 11.4,2.6 C9,4.6 3,4.6 0.6,2.6 Z" fill="#9a9a9a" stroke="#6a6a6a" stroke-width="0.4"/><rect x="3.8" y="4.6" width="4.4" height="4.4" fill="#d8d8d8"/><rect x="3.6" y="9" width="4.8" height="8.6" fill="#8a8a8a"/><g stroke="#e6e6e6" stroke-width="0.9"><line x1="3.4" y1="10" x2="8.6" y2="10"/><line x1="3.4" y1="11.9" x2="8.6" y2="11.9"/><line x1="3.4" y1="13.8" x2="8.6" y2="13.8"/><line x1="3.4" y1="15.7" x2="8.6" y2="15.7"/><line x1="3.8" y1="17.4" x2="8.2" y2="17.4"/></g></g><g transform="translate(30.00 936.50) scale(1)"><ellipse cx="6" cy="2.2" rx="5.6" ry="2" fill="#cfcfcf" stroke="#8a8a8a" stroke-width="0.6"/><path d="M0.6,2.6 C1.2,5.6 3,6 3.6,6.4 L8.4,6.4 C9,6 10.8,5.6 11.4,2.6 C9,4.6 3,4.6 0.6,2.6 Z" fill="#9a9a9a" stroke="#6a6a6a" stroke-width="0.4"/><rect x="3.8" y="4.6" width="4.4" height="4.4" fill="#d8d8d8"/><rect x="3.6" y="9" width="4.8" height="8.6" fill="#8a8a8a"/><g stroke="#e6e6e6" stroke-width="0.9"><line x1="3.4" y1="10" x2="8.6" y2="10"/><line x1="3.4" y1="11.9" x2="8.6" y2="11.9"/><line x1="3.4" y1="13.8" x2="8.6" y2="13.8"/><line x1="3.4" y1="15.7" x2="8.6" y2="15.7"/><line x1="3.8" y1="17.4" x2="8.2" y2="17.4"/></g></g></svg>
<svg style="left:0;top:0" width="1918" height="1078" viewBox="0 0 1918 1078"><g fill="none" stroke="#f6f6f6" stroke-linecap="round" stroke-linejoin="round"><path d="M13.4,9.4 C15.6,7.2 20.6,7 20.8,10.2 C20.8,12.8 17.8,14.4 15.8,15.2 C19.4,14.6 23.8,15.6 24.2,18.8 C24.6,22.4 19.6,24.8 14,23.6" stroke-width="1.9"/><path d="M5,26.4 C10.4,24.8 14.6,20.4 16,15.2 C16.6,12.6 16.6,10.6 16,8.4" stroke-width="1.7"/><path d="M16,15.2 C18,19 20.4,21.6 23.6,23.2" stroke-width="1.3"/></g><text x="30.2" y="25.2" font-family="Liberation Sans,sans-serif" font-style="italic" font-weight="700" font-size="12.6" fill="#fafafa" textLength="39.6" lengthAdjust="spacingAndGlyphs">SOLID</text><text x="70" y="25.2" font-family="Liberation Sans,sans-serif" font-style="italic" font-weight="400" font-size="12.6" fill="#f0f0f0" textLength="42" lengthAdjust="spacingAndGlyphs">WORKS</text><g transform="translate(132.80 12.60) scale(1)"><polygon points="0,0 7.2,6.8 0,13.6" fill="#fafafa"/></g><g transform="translate(172.60 10.60) scale(1)"><polygon points="3,8 9.3,2.6 15.6,8 15.6,17.6 3,17.6" fill="#f6f6f6" stroke="#2a2a2a" stroke-width="0.8"/><rect x="6.8" y="10.6" width="4.8" height="7" fill="#3a3a3a"/><rect x="8" y="11.8" width="3.6" height="5.8" fill="#fafafa"/><polyline points="0.6,9.6 9.3,1.4 18,9.6" fill="none" stroke="#143e60" stroke-width="3.4" stroke-linejoin="miter"/><polyline points="1,9.4 9.3,1.6 17.6,9.4" fill="none" stroke="#3f8fc8" stroke-width="1.6" stroke-linejoin="miter"/></g><g transform="translate(208.00 10.80) scale(1)"><path d="M0.6,0.6 L9,0.6 L13.4,5 L13.4,17.4 L0.6,17.4 Z" fill="#f2f2f2" stroke="#333" stroke-width="0.9"/><path d="M9,0.6 L9,5 L13.4,5 Z" fill="#c8c8c8" stroke="#888" stroke-width="0.5"/></g><g transform="translate(251.80 10.60) scale(1)"><path d="M1,3 L6,3 L7.6,5 L17,5 L17,17.4 L1,17.4 Z" fill="#5a5a5a" stroke="#a8a8a8" stroke-width="1"/><polygon points="5.6,8.6 19.6,6.6 15.6,17.4 1.6,17.4" fill="#ececec" stroke="#9a9a9a" stroke-width="0.8"/><path d="M6.6,1 C11,0.6 12.8,3 12.8,7" fill="none" stroke="#2468a0" stroke-width="2.6"/><polygon points="8.6,6.6 17,6.6 12.8,11.8" fill="#2468a0"/></g><g transform="translate(299.40 10.20) scale(1)"><path d="M1,1 L18.4,1 L18.4,18.6 L3.6,18.6 L1,16 Z" fill="#4a9ccc" stroke="#9a9a9a" stroke-width="1.2"/><path d="M1.6,1.6 L17.8,1.6 L17.8,18 L3.8,18 L1.6,15.8 Z" fill="none" stroke="#1d4a6c" stroke-width="0.7"/><rect x="4.4" y="1.8" width="10.6" height="8" fill="#e8e8e8" stroke="#777" stroke-width="0.6"/><rect x="5.4" y="12.8" width="9" height="5.2" fill="#f0f0f0" stroke="#555" stroke-width="0.6"/><rect x="6.8" y="13.8" width="1.6" height="3" fill="#222"/></g><g transform="translate(346.80 11.20) scale(1)"><rect x="4.2" y="0.6" width="9.6" height="7" fill="#ededed" stroke="#666" stroke-width="0.7"/><rect x="0.6" y="7" width="16.8" height="7.6" rx="1.6" fill="#58a8d8" stroke="#1d4a6c" stroke-width="0.9"/><rect x="2.4" y="9.4" width="13.2" height="1.4" fill="#d8eefa"/><rect x="3.4" y="12" width="11.2" height="2" fill="#123a58"/><polygon points="3.6,14 14.4,14 16,17.2 2,17.2" fill="#f4f4f4" stroke="#555" stroke-width="0.6"/></g><g transform="translate(393.60 10.60) scale(1)"><path d="M1,1.6 L1,8.8 L8.2,8.8 L5.8,6.4 C8.8,4.8 12.6,6.6 12.6,10 C12.6,12.4 11,13.8 9.4,14.4 L11.8,17 C15,15.6 17.2,13 17.2,9.6 C17.2,4 10,0.4 3.6,4.2 Z" fill="#4d9fd0" stroke="#1d4a6c" stroke-width="1" stroke-linejoin="round"/></g><g transform="translate(459.00 10.60) scale(1)"><g transform="scale(-1 1)"><path d="M1,1.6 L1,8.8 L8.2,8.8 L5.8,6.4 C8.8,4.8 12.6,6.6 12.6,10 C12.6,12.4 11,13.8 9.4,14.4 L11.8,17 C15,15.6 17.2,13 17.2,9.6 C17.2,4 10,0.4 3.6,4.2 Z" fill="#5c5c5c" stroke="#707070" stroke-width="1" stroke-linejoin="round"/></g></g><g transform="translate(491.20 10.60) scale(1)"><polygon points="0.6,0.6 0.6,16 4.4,12.6 7.2,18.6 9.6,17.4 6.8,11.6 11.8,11.4" fill="#fafafa" stroke="#1a1a1a" stroke-width="0.8" stroke-linejoin="round"/></g><g transform="translate(537.60 9.60) scale(1)"><rect x="0.8" y="0.8" width="11" height="18.8" rx="5.4" fill="#2e2e2e" stroke="#9c9c9c" stroke-width="1.4"/><circle cx="6.3" cy="6.3" r="2.9" fill="#e02818"/><circle cx="6.3" cy="14.2" r="2.9" fill="#18a020"/><circle cx="5.8" cy="5.6" r="0.9" fill="#ffb0a0"/><circle cx="5.8" cy="13.5" r="0.9" fill="#a0f0a0"/></g><g transform="translate(569.60 11.40) scale(1)"><rect x="0.4" y="0.4" width="14.4" height="16.4" fill="#f4f4f4" stroke="#2a2a2a" stroke-width="0.7"/><g fill="#3f8fc8" stroke="#123a58" stroke-width="0.7"><rect x="1.8" y="2.2" width="3.6" height="2.8"/><rect x="1.8" y="7" width="3.6" height="2.8"/><rect x="1.8" y="11.8" width="3.6" height="2.8"/></g><g stroke="#333" stroke-width="1"><line x1="7" y1="3.6" x2="13.4" y2="3.6"/><line x1="7" y1="8.4" x2="13.4" y2="8.4"/><line x1="7" y1="13.2" x2="13.4" y2="13.2"/></g></g><g transform="translate(609.80 19.60) scale(1)"><rect x="-1.6" y="-8" width="3.2" height="4" fill="#f4f4f4" transform="rotate(0)"/><rect x="-1.6" y="-8" width="3.2" height="4" fill="#f4f4f4" transform="rotate(45)"/><rect x="-1.6" y="-8" width="3.2" height="4" fill="#f4f4f4" transform="rotate(90)"/><rect x="-1.6" y="-8" width="3.2" height="4" fill="#f4f4f4" transform="rotate(135)"/><rect x="-1.6" y="-8" width="3.2" height="4" fill="#f4f4f4" transform="rotate(180)"/><rect x="-1.6" y="-8" width="3.2" height="4" fill="#f4f4f4" transform="rotate(225)"/><rect x="-1.6" y="-8" width="3.2" height="4" fill="#f4f4f4" transform="rotate(270)"/><rect x="-1.6" y="-8" width="3.2" height="4" fill="#f4f4f4" transform="rotate(315)"/><circle r="5.8" fill="#f4f4f4"/><circle r="3" fill="#5a5a5a"/><circle r="1.6" fill="#484848"/></g><g transform="translate(1462.00 10.00) scale(1)"><polyline points="4,5 8.4,9 4,13" fill="none" stroke="#fff" stroke-width="1.6"/><line x1="9.6" y1="13.6" x2="14" y2="13.6" stroke="#fff" stroke-width="1.4"/></g><g transform="translate(1668.00 12.00) scale(1)"><circle cx="6" cy="6" r="5" fill="none" stroke="#8a8a8a" stroke-width="1.5"/><line x1="9.6" y1="9.8" x2="15.4" y2="16" stroke="#8a8a8a" stroke-width="1.8"/></g><g transform="translate(1721.00 9.50) scale(1)"><circle cx="10" cy="10" r="8.6" fill="none" stroke="#f4f4f4" stroke-width="1.4"/><circle cx="10" cy="7.6" r="3.1" fill="none" stroke="#f4f4f4" stroke-width="1.4"/><path d="M4.2,16 C5,12.4 15,12.4 15.8,16" fill="none" stroke="#f4f4f4" stroke-width="1.4"/></g><g transform="translate(1762.00 9.50) scale(1)"><circle cx="10" cy="10" r="8.6" fill="none" stroke="#f4f4f4" stroke-width="1.4"/><path d="M6.8,7.6 C6.8,3.6 13.4,3.8 13.2,7.4 C13,9.6 10,9.8 10,12.4" fill="none" stroke="#f4f4f4" stroke-width="1.7"/><circle cx="10" cy="15" r="1.1" fill="#f4f4f4"/></g><g transform="translate(1808.00 23.00) scale(1)"><rect x="0" y="0" width="10" height="2" fill="#f4f4f4"/></g><g transform="translate(1847.00 13.00) scale(1)"><rect x="4" y="1" width="9.6" height="7.6" fill="none" stroke="#f4f4f4" stroke-width="1.5"/><rect x="0.8" y="4.6" width="9.6" height="7.6" fill="#484848" stroke="#f4f4f4" stroke-width="1.5"/></g><g transform="translate(1889.00 14.00) scale(1)"><path d="M0,0 L11,11 M11,0 L0,11" stroke="#f4f4f4" stroke-width="1.9"/></g><g transform="translate(1900.00 103.00) scale(1)"><polyline points="0.6,6.4 5.4,1.6 10.2,6.4" fill="none" stroke="#fff" stroke-width="1.9"/></g><g transform="translate(13.40 182.00) scale(1)"><polygon points="1,7.4 5.4,5.6 5.4,2.6 9,1.2 12,2.4 12,8 17.6,10 17.6,15.4 11.6,18.8 1,12.4" fill="#eebc0c" stroke="#8e8e8e" stroke-width="2.6" stroke-linejoin="round"/><polygon points="1,7.4 5.4,5.6 5.4,2.6 9,1.2 12,2.4 12,8 17.6,10 17.6,15.4 11.6,18.8 1,12.4" fill="#f2c414" stroke="#6e4c00" stroke-width="0.8" stroke-linejoin="round"/><polygon points="11.8,12.4 17.6,10 17.6,15.4 11.6,18.8" fill="#ffe562" stroke="#8a6400" stroke-width="0.5"/><polygon points="5.4,2.6 9,1.2 12,2.4 8.4,4" fill="#fff2a8" stroke="#8a6400" stroke-width="0.4"/><polygon points="8,5.6 12.6,3.6 17,5.2 17,10.6 12.4,12.8 8,11" fill="#3d8fbc" stroke="#12486a" stroke-width="0.8" stroke-linejoin="round"/><polygon points="8,5.6 12.6,3.6 17,5.2 12.4,7.4" fill="#bfe6f6" stroke="#12486a" stroke-width="0.5"/><polygon points="12.4,7.4 17,5.2 17,10.6 12.4,12.8" fill="#8fd0ec" stroke="#12486a" stroke-width="0.5"/><circle cx="3.2" cy="8.6" r="0.9" fill="#fff6c0"/></g><g transform="translate(54.60 183.40) scale(1)"><rect x="0.4" y="0.4" width="15" height="16" fill="#f4f4f4" stroke="#2a2a2a" stroke-width="0.6"/><rect x="0.4" y="0.4" width="15" height="2.4" fill="#3f8fc8"/><g fill="#3f8fc8" stroke="#123a58" stroke-width="0.6"><rect x="2" y="4.4" width="3.4" height="2.4"/><rect x="2" y="8.4" width="3.4" height="2.4"/><rect x="2" y="12.4" width="3.4" height="2.4"/></g><g stroke="#333" stroke-width="0.9"><line x1="7" y1="5.6" x2="14" y2="5.6"/><line x1="7" y1="9.6" x2="14" y2="9.6"/><line x1="7" y1="13.6" x2="14" y2="13.6"/></g></g><g transform="translate(95.60 183.00) scale(1)"><g stroke="#f0f0f0" stroke-width="1.3" fill="none"><line x1="1.4" y1="0.6" x2="1.4" y2="17"/><line x1="1.4" y1="4.6" x2="6.6" y2="4.6"/><line x1="1.4" y1="13.4" x2="7.6" y2="13.4"/><line x1="5.6" y1="1" x2="11" y2="1"/><line x1="7" y1="9.4" x2="12" y2="9.4"/></g><rect x="6.6" y="2.6" width="4" height="4" fill="#f4f4f4"/><rect x="8" y="11.2" width="4.2" height="4.4" fill="#f4f4f4"/></g><g transform="translate(141.80 191.70) scale(1)"><circle r="7.4" fill="#6a6a6a" stroke="#1a1a1a" stroke-width="2.6"/><circle r="7.4" fill="none" stroke="#8a8a8a" stroke-width="0.6"/><line x1="-10" y1="0" x2="10" y2="0" stroke="#1a1a1a" stroke-width="2"/><line x1="0" y1="-10" x2="0" y2="10" stroke="#1a1a1a" stroke-width="2"/></g><g transform="translate(182.00 191.40) scale(1)"><circle r="8.8" fill="#e8c000"/><path d="M0,0 L-8.8,0 A8.8,8.8 0 0 1 -2,-8.6 Z" fill="#2a6ad8"/><path d="M0,0 L-2,-8.6 A8.8,8.8 0 0 1 8.6,-1.6 Z" fill="#d82018"/><path d="M0,0 L-8.8,0 A8.8,8.8 0 0 0 -4,7.8 Z" fill="#28a428"/><path d="M0,0 L8.6,-1.6 A8.8,8.8 0 0 1 -4,7.8 Z" fill="#e8c000"/><circle r="8.8" fill="none" stroke="#555" stroke-width="0.5"/><ellipse cx="-2.6" cy="-4.6" rx="3.4" ry="2" fill="#fff" opacity="0.55" transform="rotate(-30)"/><ellipse cx="3.8" cy="-3.4" rx="2.6" ry="4.4" fill="#111" transform="rotate(-32 3.8 -3.4)"/></g><g transform="translate(212.00 182.60) scale(1)"><rect x="0" y="0" width="13" height="18" fill="#9c9c9c"/><polygon points="1,1 13,1 13,12 1,12" fill="#8cc8e8" stroke="#2a6a98" stroke-width="0.8"/><path d="M1,1 L13,12 M7,1 L7,12 M1,6.4 L13,6.4" fill="none" stroke="#2a6a98" stroke-width="0.7"/><polygon points="5,12.4 13,12.4 13,17.4 7,17.4" fill="#f4f4f4"/></g><g transform="translate(8.40 213.60) scale(1)"><rect x="0" y="0" width="16.4" height="2.8" rx="1.2" fill="#3f9fd8" stroke="#15507a" stroke-width="0.6"/><polygon points="0.6,3.2 15.8,3.2 9.6,10 9.6,16.6 6.8,15 6.8,10" fill="#f6f6f6" stroke="#2a2a2a" stroke-width="0.8" stroke-linejoin="round"/><polygon points="17.4,10.6 22.6,10.6 20,13.4" fill="#f4f4f4"/></g></svg>
<svg style="left:0;top:0" width="1918" height="1078" viewBox="0 0 1918 1078"><g transform="translate(34.00 46.00) scale(1)"><g opacity="0.85"><polygon points="3,5 9,2 15,4.4 15,9 19,10.6 19,15 13,18.6 1,12 1,8 3,7" fill="#5c5c5c" stroke="#6e6e6e" stroke-width="0.8"/><polygon points="8,6 13,4 17,6 17,11 12.6,13 8,11" fill="#646464" stroke="#777" stroke-width="0.7"/><polygon points="16,7 19.6,10.4 10,19 6.4,19.6 7,16" fill="#5a5a5a" stroke="#787878" stroke-width="0.8"/></g></g><g transform="translate(140.00 46.00) scale(1)"><path d="M0.8,9.4 L5.6,9.4 L6.8,11 L14.4,11 L14.4,19.2 L0.8,19.2 Z" fill="#6a6a6a" stroke="#bdbdbd" stroke-width="0.9"/><polygon points="3.6,12.6 16,12 13.2,19 1.4,19" fill="#f2f2f2" stroke="#8a8a8a" stroke-width="0.6"/><path d="M2.4,10.4 C2,6 4,3.6 7.2,3.4" fill="none" stroke="#2ea43a" stroke-width="2.4"/><polygon points="5.4,0.6 10,3.4 5.8,7" fill="#2ea43a"/></g><g transform="translate(148.60 45.60) scale(1)"><g transform="scale(0.95)"><polygon points="3.2,1.8 6.2,0.8 8.8,1.8 8.8,5.2 11.8,6.6 11.8,10.6 7.8,12.6 0.6,8.2 0.6,4.8 3.2,3.8" fill="#f2c414" stroke="#5e4200" stroke-width="0.7" stroke-linejoin="round"/><polygon points="5.8,3 8.8,1.8 8.8,5.2 5.8,6.6" fill="#ffe870"/><polygon points="8.6,8 11.8,6.6 11.8,10.6 8,12.4" fill="#ffe870"/><polygon points="3.2,1.8 6.2,0.8 8.8,1.8 5.8,3" fill="#fff4b0"/></g></g><g transform="translate(153.40 46.20) scale(1)"><g transform="scale(0.78)"><polygon points="0.4,2.2 3.8,0.4 7.4,2 7.4,6.6 3.8,8.6 0.4,6.8" fill="#3d8fbc" stroke="#0e3c5a" stroke-width="0.7" stroke-linejoin="round"/><polygon points="0.4,2.2 3.8,0.4 7.4,2 3.8,3.8" fill="#c4e8f8"/><polygon points="3.8,3.8 7.4,2 7.4,6.6 3.8,8.6" fill="#8fd0ec"/></g></g><g transform="translate(225.60 46.00) scale(1)"><g transform="rotate(-38 9 10)"><rect x="4.6" y="-1.4" width="9" height="22.6" rx="4.5" fill="none" stroke="#2a2a2a" stroke-width="3.2"/><rect x="4.6" y="-1.4" width="9" height="22.6" rx="4.5" fill="none" stroke="#e4e4e4" stroke-width="1.7"/><path d="M7.4,17 L7.4,5 A1.7,1.7 0 0 1 10.8,5 L10.8,19" fill="none" stroke="#2a2a2a" stroke-width="2.8"/><path d="M7.4,17 L7.4,5 A1.7,1.7 0 0 1 10.8,5 L10.8,19" fill="none" stroke="#d0d0d0" stroke-width="1.3"/></g></g><g transform="translate(300.80 46.40) scale(1)"><rect x="0.6" y="0.6" width="18" height="18" fill="#525252" stroke="#6c6c6c" stroke-width="1.1"/><line x1="0.6" y1="3.4" x2="18.6" y2="3.4" stroke="#6c6c6c" stroke-width="1"/><polygon points="6,7 9,6 11.4,7 11.4,10 14.4,11.4 14.4,14.4 10.6,16 4,12 4,9 6,8.4" fill="#5e5e5e" stroke="#747474" stroke-width="0.8"/></g><g transform="translate(444.40 46.40) scale(1)"><polygon points="0.5,0.5 3.6,0.5 3.6,3 7,3 7,7.5 0.5,7.5" fill="#f8d020" stroke="#1c1c1c" stroke-width="0.9"/><rect x="3.4" y="5" width="2.6" height="1.6" fill="#2a7ab8"/></g><g transform="translate(454.20 46.40) scale(1)"><polygon points="0.5,0.5 3.6,0.5 3.6,3 7,3 7,7.5 0.5,7.5" fill="#f4f4f4" stroke="#1c1c1c" stroke-width="0.9"/></g><g transform="translate(444.40 56.40) scale(1)"><polygon points="0.5,0.5 3.6,0.5 3.6,3 7,3 7,7.5 0.5,7.5" fill="#f4f4f4" stroke="#1c1c1c" stroke-width="0.9"/></g><g transform="translate(454.20 56.40) scale(1)"><polygon points="0.5,0.5 3.6,0.5 3.6,3 7,3 7,7.5 0.5,7.5" fill="#f4f4f4" stroke="#1c1c1c" stroke-width="0.9"/></g><g transform="translate(564.20 46.80) scale(1)"><path d="M0.8,2 L5.8,2 L7,3.8 L18,3.8 L18,18 L0.8,18 Z" fill="#ededed" stroke="#8a8a8a" stroke-width="1.2"/><rect x="2.2" y="5.4" width="14.4" height="11.2" fill="#f8f8f8" stroke="#b4b4b4" stroke-width="0.5"/><rect x="5.4" y="10.6" width="9.6" height="3.4" fill="#d4d4d4" stroke="#3a3a3a" stroke-width="0.8"/><ellipse cx="5.8" cy="12.3" rx="1.6" ry="2.6" fill="#bdbdbd" stroke="#3a3a3a" stroke-width="0.8"/><polygon points="14,0 18.4,0.4 14.4,5 16.6,5.2 8.6,12 11,6.8 9,6.6" fill="#f8a818" stroke="#c04808" stroke-width="0.7" stroke-linejoin="round"/></g><g transform="translate(659.20 47.40) scale(1)"><polygon points="7.6,2.2 13,0.6 18.6,2.4 18.6,11.6 13,14.4 7.6,12.4" fill="#e8b818" stroke="#8a6400" stroke-width="0.9" stroke-linejoin="round"/><polygon points="7.6,2.2 13,0.6 18.6,2.4 13,4.4" fill="#fff0a0"/><polygon points="0.8,4.4 6.4,2.6 11.4,4.4 11.4,13.6 6.2,16.2 0.8,13.8" fill="#e2e2e2" stroke="#8a8a8a" stroke-width="1" stroke-linejoin="round"/><polygon points="0.8,4.4 6.4,2.6 11.4,4.4 6,6.4" fill="#fcfcfc"/><polygon points="6,6.4 11.4,4.4 11.4,13.6 6.2,16.2" fill="#c4c4c4"/><line x1="7.4" y1="9.4" x2="15" y2="7.6" stroke="#111" stroke-width="1.8"/><polygon points="13,4.8 17.6,7 14.2,10.6" fill="#111"/></g><g transform="translate(768.20 46.00) scale(1)"><polygon points="9,6.6 12.6,5.2 16,6.6 16,10 19,11.4 19,15.6 14.6,17.8 9,14.4" fill="#dcdcdc" stroke="#8a8a8a" stroke-width="0.9"/><line x1="13.4" y1="8" x2="13.4" y2="15" stroke="#fff" stroke-width="1.2"/><line x1="16.4" y1="10" x2="16.4" y2="15.4" stroke="#fff" stroke-width="1.2"/><path d="M3.4,5.6 C5,1.4 10,0.6 12.4,3.6" fill="none" stroke="#e8e8e8" stroke-width="2.8"/><path d="M3.4,5.6 C5,1.4 10,0.6 12.4,3.6" fill="none" stroke="#2a2a2a" stroke-width="1.5"/><polygon points="1,3.4 6.4,4.2 3,8" fill="#2a2a2a" stroke="#e8e8e8" stroke-width="0.5"/></g><g transform="translate(769.00 52.20) scale(1)"><g transform="scale(0.98)"><polygon points="3.2,1.8 6.2,0.8 8.8,1.8 8.8,5.2 11.8,6.6 11.8,10.6 7.8,12.6 0.6,8.2 0.6,4.8 3.2,3.8" fill="#f2c414" stroke="#5e4200" stroke-width="0.7" stroke-linejoin="round"/><polygon points="5.8,3 8.8,1.8 8.8,5.2 5.8,6.6" fill="#ffe870"/><polygon points="8.6,8 11.8,6.6 11.8,10.6 8,12.4" fill="#ffe870"/><polygon points="3.2,1.8 6.2,0.8 8.8,1.8 5.8,3" fill="#fff4b0"/></g></g><g transform="translate(853.20 46.80) scale(1)"><polygon points="0.8,3.4 6,1 14.2,2.6 14.2,13.4 9,16.6 0.8,14.4" fill="#d8d8d8" stroke="#8a8a8a" stroke-width="1" stroke-linejoin="round"/><polygon points="0.8,3.4 6,1 14.2,2.6 9,5" fill="#fafafa"/><polygon points="9,5 14.2,2.6 14.2,13.4 9,16.6" fill="#b8b8b8"/><path d="M3.4,3 C3.4,1.6 11.6,1.6 11.6,3.2 L11.6,5.4 L9.4,6 L9.4,15.6 L5.6,14.8 L5.6,5.8 L3.4,5.2 Z" fill="#3f8fc8" stroke="#123a58" stroke-width="0.8"/><ellipse cx="7.5" cy="3" rx="4" ry="1.3" fill="#8fd0ec"/></g><g transform="translate(920.00 46.00) scale(1)"><polygon points="8,5.4 18.6,2 18.6,15.4 8,19" fill="#58a8d8" stroke="#c4c4c4" stroke-width="1.1"/><polygon points="8.8,6.2 17.8,3.2 17.8,14.8 8.8,17.8" fill="none" stroke="#1d4a6c" stroke-width="0.6"/><line x1="13.4" y1="1" x2="13.4" y2="19.4" stroke="#e4e4e4" stroke-width="2.2"/><line x1="13.4" y1="1.4" x2="13.4" y2="19.2" stroke="#1a1a1a" stroke-width="0.9" stroke-dasharray="2.4 1.4"/><circle cx="3.8" cy="3.8" r="2.9" fill="#58a8d8" stroke="#d8d8d8" stroke-width="1.1"/></g><g transform="translate(1001.60 46.00) scale(1)"><g transform="translate(14.2 6.2)"><rect x="-1.3" y="-6.2" width="2.6" height="2.4" fill="#fafafa" transform="rotate(0)"/><rect x="-1.3" y="-6.2" width="2.6" height="2.4" fill="#fafafa" transform="rotate(45)"/><rect x="-1.3" y="-6.2" width="2.6" height="2.4" fill="#fafafa" transform="rotate(90)"/><rect x="-1.3" y="-6.2" width="2.6" height="2.4" fill="#fafafa" transform="rotate(135)"/><rect x="-1.3" y="-6.2" width="2.6" height="2.4" fill="#fafafa" transform="rotate(180)"/><rect x="-1.3" y="-6.2" width="2.6" height="2.4" fill="#fafafa" transform="rotate(225)"/><rect x="-1.3" y="-6.2" width="2.6" height="2.4" fill="#fafafa" transform="rotate(270)"/><rect x="-1.3" y="-6.2" width="2.6" height="2.4" fill="#fafafa" transform="rotate(315)"/><circle r="4.6" fill="#fafafa"/><circle r="2.3" fill="#484848"/></g><g transform="translate(6.6 14.4)"><rect x="-1.3" y="-5.8" width="2.6" height="2.4" fill="#9a9a9a" transform="rotate(0)"/><rect x="-1.3" y="-5.8" width="2.6" height="2.4" fill="#9a9a9a" transform="rotate(45)"/><rect x="-1.3" y="-5.8" width="2.6" height="2.4" fill="#9a9a9a" transform="rotate(90)"/><rect x="-1.3" y="-5.8" width="2.6" height="2.4" fill="#9a9a9a" transform="rotate(135)"/><rect x="-1.3" y="-5.8" width="2.6" height="2.4" fill="#9a9a9a" transform="rotate(180)"/><rect x="-1.3" y="-5.8" width="2.6" height="2.4" fill="#9a9a9a" transform="rotate(225)"/><rect x="-1.3" y="-5.8" width="2.6" height="2.4" fill="#9a9a9a" transform="rotate(270)"/><rect x="-1.3" y="-5.8" width="2.6" height="2.4" fill="#9a9a9a" transform="rotate(315)"/><circle r="4.2" fill="#9a9a9a"/><circle r="2.1" fill="#484848"/></g><g stroke="#f07820" stroke-width="1.3"><line x1="4.2" y1="4.2" x2="8.1" y2="4.2"/><line x1="4.2" y1="4.2" x2="7.0" y2="7.0"/><line x1="4.2" y1="4.2" x2="4.2" y2="8.1"/><line x1="4.2" y1="4.2" x2="1.4" y2="7.0"/><line x1="4.2" y1="4.2" x2="0.3" y2="4.2"/><line x1="4.2" y1="4.2" x2="1.4" y2="1.4"/><line x1="4.2" y1="4.2" x2="4.2" y2="0.3"/><line x1="4.2" y1="4.2" x2="7.0" y2="1.4"/></g><circle cx="4.2" cy="4.2" r="1.5" fill="#fff0d0"/></g><g transform="translate(1081.20 46.20) scale(1)"><rect x="0.6" y="0.6" width="13.4" height="11.4" rx="1" fill="#fafafa" stroke="#8a8a8a" stroke-width="1"/><rect x="1.2" y="1.2" width="12.2" height="2.6" fill="#2a6aa8"/><g stroke="#555" stroke-width="0.7"><line x1="1" y1="6.4" x2="13.6" y2="6.4"/><line x1="1" y1="9.2" x2="13.6" y2="9.2"/><line x1="5.2" y1="3.8" x2="5.2" y2="12"/><line x1="9.4" y1="3.8" x2="9.4" y2="12"/></g></g><g transform="translate(1087.40 51.80) scale(1)"><g transform="scale(1.0)"><polygon points="3.2,1.8 6.2,0.8 8.8,1.8 8.8,5.2 11.8,6.6 11.8,10.6 7.8,12.6 0.6,8.2 0.6,4.8 3.2,3.8" fill="#f2c414" stroke="#5e4200" stroke-width="0.7" stroke-linejoin="round"/><polygon points="5.8,3 8.8,1.8 8.8,5.2 5.8,6.6" fill="#ffe870"/><polygon points="8.6,8 11.8,6.6 11.8,10.6 8,12.4" fill="#ffe870"/><polygon points="3.2,1.8 6.2,0.8 8.8,1.8 5.8,3" fill="#fff4b0"/></g></g><g transform="translate(1092.40 52.40) scale(1)"><g transform="scale(0.8)"><polygon points="0.4,2.2 3.8,0.4 7.4,2 7.4,6.6 3.8,8.6 0.4,6.8" fill="#3d8fbc" stroke="#0e3c5a" stroke-width="0.7" stroke-linejoin="round"/><polygon points="0.4,2.2 3.8,0.4 7.4,2 3.8,3.8" fill="#c4e8f8"/><polygon points="3.8,3.8 7.4,2 7.4,6.6 3.8,8.6" fill="#8fd0ec"/></g></g><g transform="translate(1166.60 52.00) scale(1)"><g transform="scale(1.0)"><polygon points="3.2,1.8 6.2,0.8 8.8,1.8 8.8,5.2 11.8,6.6 11.8,10.6 7.8,12.6 0.6,8.2 0.6,4.8 3.2,3.8" fill="#f2c414" stroke="#5e4200" stroke-width="0.7" stroke-linejoin="round"/><polygon points="5.8,3 8.8,1.8 8.8,5.2 5.8,6.6" fill="#ffe870"/><polygon points="8.6,8 11.8,6.6 11.8,10.6 8,12.4" fill="#ffe870"/><polygon points="3.2,1.8 6.2,0.8 8.8,1.8 5.8,3" fill="#fff4b0"/></g></g><g transform="translate(1177.60 46.20) scale(1)"><g transform="scale(0.9)"><polygon points="0.4,2.2 3.8,0.4 7.4,2 7.4,6.6 3.8,8.6 0.4,6.8" fill="#3d8fbc" stroke="#0e3c5a" stroke-width="0.7" stroke-linejoin="round"/><polygon points="0.4,2.2 3.8,0.4 7.4,2 3.8,3.8" fill="#c4e8f8"/><polygon points="3.8,3.8 7.4,2 7.4,6.6 3.8,8.6" fill="#8fd0ec"/></g></g><g transform="translate(1166.60 46.00) scale(1)"><polyline points="9,9.6 14.6,9.6 14.6,7.6" fill="none" stroke="#f0f0f0" stroke-width="1.1" stroke-dasharray="1.6 1.2"/><polyline points="9,10.4 15.4,10.4 15.4,8" fill="none" stroke="#111" stroke-width="0.8" stroke-dasharray="1.6 1.2"/></g><g transform="translate(1253.20 46.00) scale(1)"><polygon points="0.8,8.6 3,6.6 13.6,12.4 15.4,10.6 19.4,17.8 10.4,17.4 12,15.6 1.6,10.6" fill="#2f7cb0" stroke="#7a7a7a" stroke-width="0.7" stroke-linejoin="round"/><polygon points="4,1 18.6,7.6 18.6,13 4,6.4" fill="#f4d84a" stroke="#8a6a00" stroke-width="0.8" stroke-linejoin="round"/><polygon points="4,1 18.6,7.6 18.6,9 4,2.4" fill="#fff4a8"/><g stroke="#6a5000" stroke-width="0.8"><line x1="7.6" y1="3.4" x2="7.6" y2="6"/><line x1="11.2" y1="5" x2="11.2" y2="7.6"/><line x1="14.8" y1="6.6" x2="14.8" y2="9.2"/></g></g><g transform="translate(1350.60 46.60) scale(1)"><polygon points="1,5 7,2.4 12,4 12,14 6,17 1,14.6" fill="#9a9a9a" stroke="#c8c8c8" stroke-width="0.8"/><polygon points="8,5.6 13.4,3.4 19,5.4 19,15.4 13.4,18 8,15.8" fill="#e8b818" stroke="#8a6400" stroke-width="0.8"/><polygon points="13.4,9.4 19,7.4 19,15.4 13.4,18" fill="#ffe870"/><polygon points="9.4,3.6 13.8,1.6 18.2,3.4 18.2,9 13.8,11.2 9.4,9.2" fill="#3d8fbc" stroke="#0e3c5a" stroke-width="0.8"/><polygon points="9.4,3.6 13.8,1.6 18.2,3.4 13.8,5.4" fill="#c4e8f8"/><polygon points="13.8,5.4 18.2,3.4 18.2,9 13.8,11.2" fill="#8fd0ec"/><polygon points="4.6,8.6 9.6,17.6 -0.4,17.6" fill="#ffd818" stroke="#c03010" stroke-width="1" stroke-linejoin="round"/><rect x="4" y="11.4" width="1.3" height="3.4" fill="#111"/><rect x="4" y="15.4" width="1.3" height="1.3" fill="#111"/></g><g transform="translate(1447.40 48.00) scale(1)"><path d="M0.8,3.4 L4,3.4 L5.4,1 L12,1 L13.4,3.4 L16.8,3.4 L16.8,14 L0.8,14 Z" fill="#ececec" stroke="#3a3a3a" stroke-width="0.8"/><circle cx="9" cy="8.4" r="4.6" fill="#3a3a3a" stroke="#bdbdbd" stroke-width="1"/><circle cx="9" cy="8.4" r="2.4" fill="#777"/><circle cx="9.8" cy="7.6" r="1" fill="#e8e8e8"/><rect x="1.8" y="1.6" width="2.4" height="1.6" fill="#d0d0d0"/></g><g transform="translate(1533.00 46.00) scale(1)"><rect x="0.4" y="0.6" width="19.4" height="19" rx="3" fill="#8e8e8e"/><g stroke="#b8b8b8" stroke-width="0.9"><line x1="1" y1="13.4" x2="8" y2="13.4"/><line x1="1" y1="15.4" x2="9" y2="15.4"/><line x1="1" y1="17.4" x2="10" y2="17.4"/></g></g><g transform="translate(1534.20 46.20) scale(1)"><g transform="scale(0.98)"><polygon points="1,7.4 5.4,5.6 5.4,2.6 9,1.2 12,2.4 12,8 17.6,10 17.6,15.4 11.6,18.8 1,12.4" fill="#eebc0c" stroke="#8e8e8e" stroke-width="2.6" stroke-linejoin="round"/><polygon points="1,7.4 5.4,5.6 5.4,2.6 9,1.2 12,2.4 12,8 17.6,10 17.6,15.4 11.6,18.8 1,12.4" fill="#f2c414" stroke="#6e4c00" stroke-width="0.8" stroke-linejoin="round"/><polygon points="11.8,12.4 17.6,10 17.6,15.4 11.6,18.8" fill="#ffe562" stroke="#8a6400" stroke-width="0.5"/><polygon points="5.4,2.6 9,1.2 12,2.4 8.4,4" fill="#fff2a8" stroke="#8a6400" stroke-width="0.4"/><polygon points="8,5.6 12.6,3.6 17,5.2 17,10.6 12.4,12.8 8,11" fill="#3d8fbc" stroke="#12486a" stroke-width="0.8" stroke-linejoin="round"/><polygon points="8,5.6 12.6,3.6 17,5.2 12.4,7.4" fill="#bfe6f6" stroke="#12486a" stroke-width="0.5"/><polygon points="12.4,7.4 17,5.2 17,10.6 12.4,12.8" fill="#8fd0ec" stroke="#12486a" stroke-width="0.5"/><circle cx="3.2" cy="8.6" r="0.9" fill="#fff6c0"/></g></g></svg>
<div class="a" style="left:0px;top:979px;width:1887px;height:19px;background:#484848;"></div>
<div class="a" style="left:0px;top:998px;width:1918px;height:1px;background:#6e6e6e;"></div>
<div class="a" style="left:0px;top:978.6px;width:2px;height:19.4px;background:#a6bcbc;"></div>
<div class="a" style="left:2px;top:978.6px;width:80px;height:19.2px;background:#a5a5bf;"></div>
<div class="a" style="left:2px;top:978px;width:80px;height:1px;background:#101010;"></div>
<div class="a" style="left:21.5px;top:979px;width:1.4px;height:18.6px;background:#8a8aa4;"></div>
<div class="a" style="left:41.5px;top:979px;width:1.4px;height:18.6px;background:#8a8aa4;"></div>
<div class="a" style="left:61.5px;top:979px;width:1.4px;height:18.6px;background:#8a8aa4;"></div>
<div class="a" style="left:2px;top:979px;width:1px;height:18.6px;background:#b6b6cc;"></div>
<div class="a" style="left:23px;top:979px;width:1px;height:18.6px;background:#b6b6cc;"></div>
<div class="a" style="left:43px;top:979px;width:1px;height:18.6px;background:#b6b6cc;"></div>
<div class="a" style="left:63px;top:979px;width:1px;height:18.6px;background:#b6b6cc;"></div>
<div class="a" style="left:159px;top:979px;width:144px;height:20px;background:#2d2d2d;border:1px solid #666;box-sizing:border-box;"></div>
<div class="a" style="left:0px;top:999px;width:1918px;height:22px;background:#484848;"></div>
<div class="a" style="left:1887px;top:122px;width:31px;height:876px;background:#484848;"></div>
<div class="a" style="left:1885.6px;top:122px;width:1.6px;height:876px;background:#f2f2f2;"></div>
<div class="a" style="left:0px;top:1020px;width:1918px;height:58px;background:#eeeeee;"></div>
<div class="a" style="left:0px;top:1020px;width:1918px;height:1px;background:#c4c4c4;"></div>
<div class="a" style="left:520px;top:1030.5px;width:273px;height:38.5px;background:#fbfbfb;border:1px solid #d6d6d6;border-radius:19.5px;box-sizing:border-box;"></div>
<div class="a" style="left:1405.3px;top:1025.7px;width:48px;height:48.5px;background:#f8f8f8;border:1px solid #e4e4e4;border-radius:5px;box-sizing:border-box;"></div>
<div class="a" style="left:875px;top:1070.2px;width:8px;height:3px;background:#8c8c8c;border-radius:1.5px;"></div>
<div class="a" style="left:930px;top:1070.2px;width:8px;height:3px;background:#8c8c8c;border-radius:1.5px;"></div>
<div class="a" style="left:1149.5px;top:1070.2px;width:8px;height:3px;background:#8c8c8c;border-radius:1.5px;"></div>
<div class="a" style="left:1204.5px;top:1070.2px;width:8px;height:3px;background:#8c8c8c;border-radius:1.5px;"></div>
<div class="a" style="left:1259.5px;top:1070.2px;width:8px;height:3px;background:#8c8c8c;border-radius:1.5px;"></div>
<div class="a" style="left:1314.5px;top:1070.2px;width:8px;height:3px;background:#8c8c8c;border-radius:1.5px;"></div>
<div class="a" style="left:1369.5px;top:1070.2px;width:8px;height:3px;background:#8c8c8c;border-radius:1.5px;"></div>
<div class="a" style="left:1418.8px;top:1070.4px;width:20.4px;height:3.4px;background:#1a78d8;border-radius:1.7px;"></div>
<svg style="left:0;top:0" width="1918" height="1078" viewBox="0 0 1918 1078"><g transform="translate(916.00 127.60) scale(1)"><circle cx="10.6" cy="6.8" r="5.6" fill="#eef4f8" fill-opacity="0.85" stroke="#5a5a5a" stroke-width="1.3"/><line x1="6.6" y1="11" x2="1.6" y2="16.6" stroke="#2f7cb0" stroke-width="3" stroke-linecap="round"/><line x1="6.6" y1="11" x2="1.8" y2="16.4" stroke="#6db4dc" stroke-width="1.3" stroke-linecap="round"/><g fill="#333"><polygon points="10.6,2.6 9,4.6 12.2,4.6"/><polygon points="10.6,11 9,9 12.2,9"/><polygon points="6.4,6.8 8.4,5.2 8.4,8.4"/><polygon points="14.8,6.8 12.8,5.2 12.8,8.4"/></g></g><g transform="translate(941.60 127.60) scale(1)"><rect x="7" y="0.8" width="11.6" height="11.6" fill="none" stroke="#333" stroke-width="1.1" stroke-dasharray="2.6 1.8"/><circle cx="9.6" cy="8" r="5.6" fill="#eef4f8" fill-opacity="0.85" stroke="#5a5a5a" stroke-width="1.3"/><line x1="5.6" y1="12.2" x2="1.6" y2="16.6" stroke="#2f7cb0" stroke-width="3" stroke-linecap="round"/><line x1="5.6" y1="12.2" x2="1.8" y2="16.4" stroke="#6db4dc" stroke-width="1.3" stroke-linecap="round"/></g><g transform="translate(967.40 128.00) scale(1)"><polygon points="3,9.6 14,1.4 17.4,4.4 8.6,14.6 4.6,15.6 1.6,13.6" fill="#e4e4e4" stroke="#555" stroke-width="0.9" stroke-linejoin="round"/><ellipse cx="4.6" cy="13" rx="2.4" ry="3.2" fill="#f8f8f8" stroke="#555" stroke-width="0.8" transform="rotate(-40 4.6 13)"/><line x1="11" y1="12.6" x2="18" y2="12.6" stroke="#2f7cb0" stroke-width="2.4"/><polygon points="8,12.6 12.4,9 12.4,16.2" fill="#2f7cb0"/></g><g transform="translate(993.60 128.00) scale(1)"><path d="M1,5 C1,1.4 17.6,1.4 17.6,5 L17.6,14 L13.4,15.8 L13.4,7.6 C13.4,5.8 5.6,5.8 5.6,7.6 L5.6,16.8 L1,14.6 Z" fill="#d4d4d4" stroke="#555" stroke-width="0.9"/><polygon points="1,6 5.6,8 5.6,16.8 1,14.6" fill="#58a8d8" stroke="#1d4a6c" stroke-width="0.7"/><polygon points="13.4,7.8 17.6,6 17.6,14 13.4,15.8" fill="#58a8d8" stroke="#1d4a6c" stroke-width="0.7"/><g stroke="#1d4a6c" stroke-width="0.6"><line x1="1.6" y1="9" x2="5" y2="12"/><line x1="1.6" y1="11.6" x2="5" y2="14.6"/><line x1="14" y1="10.6" x2="17" y2="8"/><line x1="14" y1="13.4" x2="17" y2="10.8"/></g></g><g transform="translate(1019.40 127.60) scale(1)"><polygon points="1,5.6 6,1 18.4,1 18.4,13.4 13.6,18 1,18" fill="#f2f2f2" stroke="#555" stroke-width="0.8"/><rect x="1" y="5.6" width="12.6" height="12.4" fill="#58a8d8" stroke="#1d4a6c" stroke-width="0.9"/><path d="M13.6,5.6 L18.4,1 M13.6,5.6 L13.6,18" fill="none" stroke="#555" stroke-width="0.7"/><line x1="6" y1="1" x2="6" y2="5" stroke="#555" stroke-width="0.6" stroke-dasharray="1.4 1"/><g fill="#222"><polygon points="14.6,9.6 17.6,8 17.6,11.2"/><polygon points="9.6,2 12.8,3.2 9.6,4.4"/></g></g><g transform="translate(1045.40 135.80) scale(1)"><polygon points="0,0 6,0 3,3.4" fill="#8e8e8e"/></g><g transform="translate(1060.60 127.60) scale(1)"><polygon points="1,3.6 6,1 17,2.6 17,15 11.6,18.4 1,15.4" fill="#58a8d8" stroke="#7a7a7a" stroke-width="1" stroke-linejoin="round"/><polygon points="1,3.6 6,1 17,2.6 11.6,5.6" fill="#d4ecf8"/><polygon points="11.6,5.6 17,2.6 17,15 11.6,18.4" fill="#ececec" stroke="#8a8a8a" stroke-width="0.5"/><polygon points="1,3.6 4.6,4.2 4.6,16.4 1,15.4" fill="#2f7cb0"/></g><g transform="translate(1085.40 135.80) scale(1)"><polygon points="0,0 6,0 3,3.4" fill="#8e8e8e"/></g><rect x="1096.5" y="124.5" width="39" height="25" fill="#b4b4b4" fill-opacity="0.55" stroke="#8a8a8a" stroke-width="1"/><rect x="1096.5" y="124.5" width="26" height="25" fill="#a8a8a8" fill-opacity="0.9" stroke="#7a7a7a" stroke-width="1"/><g transform="translate(1100.00 128.60) scale(1)"><path d="M0.4,8.4 C4,1.4 15,1.4 18.6,8.4 C15,15 4,15 0.4,8.4 Z" fill="#f4f4f4" stroke="#444" stroke-width="0.8"/><path d="M9.5,3 A5.4,5.4 0 0 0 9.5,13.8 Z" fill="#111"/><circle cx="9.5" cy="8.4" r="5.4" fill="none" stroke="#111" stroke-width="0.9"/><line x1="9.5" y1="0" x2="9.5" y2="17.6" stroke="#111" stroke-width="1"/></g><g transform="translate(1125.40 135.80) scale(1)"><polygon points="0,0 6,0 3,3.4" fill="#555"/></g><g transform="translate(1147.00 134.60) scale(1)"><circle r="7.6" fill="#e8c000"/><path d="M0,0 L-7.6,0 A7.6,7.6 0 0 1 0,-7.6 Z" fill="#3a78d8"/><path d="M0,0 L0,-7.6 A7.6,7.6 0 0 1 7.6,0 Z" fill="#d83a30"/><path d="M0,0 L-7.6,0 A7.6,7.6 0 0 0 0,7.6 Z" fill="#38a838"/><circle r="7.6" fill="none" stroke="#666" stroke-width="0.5"/><ellipse cx="-2" cy="-3.6" rx="3.6" ry="2" fill="#fff" opacity="0.5" transform="rotate(-30)"/><polygon points="2,8 8.6,0.4 11.8,3.4 5,10.6 1,11.6" fill="#f0c040" stroke="#6a4a00" stroke-width="0.8"/><polygon points="8.6,0.4 10.2,-1.4 13.4,1.6 11.8,3.4" fill="#e05050" stroke="#6a2020" stroke-width="0.6"/><polygon points="1,11.6 2,8 5,10.6" fill="#f8e8c0" stroke="#333" stroke-width="0.5"/></g><g transform="translate(1174.40 134.00) scale(1)"><circle r="7.6" fill="#e8c000"/><path d="M0,0 L-7.6,0 A7.6,7.6 0 0 1 0,-7.6 Z" fill="#3a78d8"/><path d="M0,0 L0,-7.6 A7.6,7.6 0 0 1 7.6,0 Z" fill="#d83a30"/><path d="M0,0 L-7.6,0 A7.6,7.6 0 0 0 0,7.6 Z" fill="#38a838"/><circle r="7.6" fill="none" stroke="#666" stroke-width="0.5"/><ellipse cx="-2" cy="-3.6" rx="3.6" ry="2" fill="#fff" opacity="0.5" transform="rotate(-30)"/><rect x="-9" y="4.6" width="18" height="8" fill="#222"/><g fill="#f0f0f0"><rect x="-9" y="4.6" width="3" height="2.6"/><rect x="-3" y="4.6" width="3" height="2.6"/><rect x="3" y="4.6" width="3" height="2.6"/><rect x="-6" y="7.2" width="3" height="2.6"/><rect x="0" y="7.2" width="3" height="2.6"/><rect x="6" y="7.2" width="3" height="2.6"/><rect x="-9" y="9.8" width="3" height="2.6"/><rect x="-3" y="9.8" width="3" height="2.6"/><rect x="3" y="9.8" width="3" height="2.6"/></g></g><g transform="translate(1191.40 135.80) scale(1)"><polygon points="0,0 6,0 3,3.4" fill="#8e8e8e"/></g><g transform="translate(1206.00 128.60) scale(1)"><rect x="0.6" y="0.6" width="17" height="11.4" fill="#c8c8c8" stroke="#4a4a4a" stroke-width="1.2"/><rect x="7" y="12" width="4.2" height="2.6" fill="#4a4a4a"/><rect x="4.4" y="14.4" width="9.4" height="1.4" fill="#4a4a4a"/></g><g transform="translate(1231.20 135.80) scale(1)"><polygon points="0,0 6,0 3,3.4" fill="#8e8e8e"/></g><g transform="translate(1757.00 131.00) scale(1)"><rect x="0.6" y="0.6" width="11" height="11" fill="none" stroke="#7c8288" stroke-width="1.1"/><line x1="3.6" y1="0.6" x2="3.6" y2="11.6" stroke="#7c8288" stroke-width="0.9"/><polygon points="2.6,6.1 0.8,4.6 0.8,7.6" fill="#7c8288"/></g><g transform="translate(1783.00 131.00) scale(1)"><rect x="0.6" y="0.6" width="11" height="11" fill="none" stroke="#7c8288" stroke-width="1.1"/><line x1="8.6" y1="0.6" x2="8.6" y2="11.6" stroke="#7c8288" stroke-width="0.9"/><polygon points="9.4,6.1 11.4,4.6 11.4,7.6" fill="#7c8288"/></g><g transform="translate(1810.00 141.40) scale(1)"><rect x="0" y="0" width="9" height="1.4" fill="#7c8288"/></g><g transform="translate(1834.00 131.00) scale(1)"><rect x="4" y="0.6" width="9.6" height="7" fill="none" stroke="#7c8288" stroke-width="1.1"/><rect x="0.6" y="4.4" width="9.6" height="7" fill="#dcdcd6" stroke="#7c8288" stroke-width="1.1"/></g><g transform="translate(1861.60 132.00) scale(1)"><path d="M0,0 L10,10 M10,0 L0,10" stroke="#7c8288" stroke-width="1.2"/></g><g><polygon points="321.9,909.5 322.3,886.3 320,886.3 324.4,874.9 328,886.3 326.1,886.3 325.8,910" fill="#9c0000"/><polygon points="323.8,909.8 306.8,903.6 301.2,906.8 295,900.1 305,899.1 307.6,901.8 324.4,907.6" fill="#004c00"/><polygon points="325,908.4 306,915.4 304.2,913.5 299.6,919.7 307.5,921 308.4,918.4 325.6,911.6" fill="#0000b8"/></g><text x="322.6" y="868.6" font-family="Liberation Sans,sans-serif" font-size="8.6" fill="#ff4848">X</text><text x="287" y="897.8" font-family="Liberation Sans,sans-serif" font-size="8.6" fill="#0c8a0c">Y</text><text x="292.6" y="921.6" font-family="Liberation Sans,sans-serif" font-size="8.6" font-weight="700" fill="#4444ff">Z</text><rect x="1854.5" y="180.5" width="32.5" height="209" fill="#2f2f2f" stroke="#6a6a6a" stroke-width="1"/><rect x="1855" y="181" width="32" height="29" fill="#b6b6b6"/><line x1="1855" y1="209.8" x2="1887" y2="209.8" stroke="#6a6a6a" stroke-width="1"/><line x1="1855" y1="239.5" x2="1887" y2="239.5" stroke="#6a6a6a" stroke-width="1"/><line x1="1855" y1="269.2" x2="1887" y2="269.2" stroke="#6a6a6a" stroke-width="1"/><line x1="1855" y1="299.7" x2="1887" y2="299.7" stroke="#6a6a6a" stroke-width="1"/><line x1="1855" y1="329.4" x2="1887" y2="329.4" stroke="#6a6a6a" stroke-width="1"/><line x1="1855" y1="359.6" x2="1887" y2="359.6" stroke="#6a6a6a" stroke-width="1"/><g transform="translate(1871.00 195.00) scale(1)"><circle r="9.6" fill="#1a5a8c" stroke="#0c3454" stroke-width="0.8"/><circle r="6" fill="none" stroke="#6ab0e0" stroke-width="0.9"/><polygon points="-2,-3.4 3.4,0 -2,3.4" fill="none" stroke="#cfe8f8" stroke-width="0.9"/><ellipse cx="-1" cy="-5" rx="6" ry="3" fill="#fff" opacity="0.25"/></g><g transform="translate(1861.80 215.60) scale(1)"><polygon points="3,8 9.3,2.6 15.6,8 15.6,17.6 3,17.6" fill="#f6f6f6" stroke="#2a2a2a" stroke-width="0.8"/><rect x="7" y="10.8" width="4.6" height="6.8" fill="#3a3a3a"/><rect x="8.2" y="12" width="3.4" height="5.6" fill="#fafafa"/><polyline points="0.6,9.6 9.3,1.4 18,9.6" fill="none" stroke="#143e60" stroke-width="3.2"/><polyline points="1,9.4 9.3,1.6 17.6,9.4" fill="none" stroke="#3f8fc8" stroke-width="1.5"/></g><g transform="translate(1863.40 246.00) scale(1)"><g fill="#f2f2f2" stroke="#333" stroke-width="0.7"><polygon points="0.6,3.6 3.6,2.4 3.6,15 0.6,13.6"/><polygon points="3.6,2.4 6.4,1.4 6.4,16 3.6,15"/><polygon points="6.4,3 9.6,1.6 9.6,16.4 6.4,17.4"/><polygon points="9.6,2 12.6,0.8 12.6,15 9.6,16.4"/><polygon points="12.6,2.4 15,1.6 15,13.6 12.6,15"/></g></g><g transform="translate(1861.60 276.40) scale(1)"><path d="M0.8,1 L6,1 L7.4,3 L16,3 L16,15 L0.8,15 Z" fill="#d0d0d0" stroke="#555" stroke-width="0.8"/><polygon points="4,6.4 19.4,6.4 15.6,15.4 0.6,15.4" fill="#f6f6f6" stroke="#666" stroke-width="0.8"/></g><g transform="translate(1861.00 304.60) scale(1)"><rect x="0.6" y="0.6" width="19" height="19" rx="2.4" fill="#3a3a3a" stroke="#dcdcdc" stroke-width="1.2"/><path d="M3.4,3.6 L12.6,3.6 L12.6,7 L9.6,7 L9.6,12.6 L12.6,12.6 L12.6,16 L3.4,16 L3.4,12.6 L6.4,12.6 L6.4,7 L3.4,7 Z" fill="#f4c414" stroke="#fff4b0" stroke-width="0.6"/><rect x="14.2" y="3.6" width="3" height="3" fill="#f4c414"/><rect x="14.2" y="8.4" width="3" height="7.6" fill="#d8d8d8"/></g><g transform="translate(1871.00 344.40) scale(1)"><circle r="7.6" fill="#e8c000"/><path d="M0,0 L-7.6,0 A7.6,7.6 0 0 1 0,-7.6 Z" fill="#3a78d8"/><path d="M0,0 L0,-7.6 A7.6,7.6 0 0 1 7.6,0 Z" fill="#d83a30"/><path d="M0,0 L-7.6,0 A7.6,7.6 0 0 0 0,7.6 Z" fill="#38a838"/><circle r="7.6" fill="none" stroke="#666" stroke-width="0.5"/><ellipse cx="-2" cy="-3.6" rx="3.6" ry="2" fill="#fff" opacity="0.5" transform="rotate(-30)"/></g><g transform="translate(1863.20 366.00) scale(1)"><rect x="0.4" y="0.4" width="15.4" height="16.6" fill="#f4f4f4" stroke="#2a2a2a" stroke-width="0.6"/><rect x="0.4" y="0.4" width="15.4" height="2.6" fill="#3f8fc8"/><g fill="#3f8fc8" stroke="#123a58" stroke-width="0.6"><rect x="2" y="4.8" width="3.6" height="2.6"/><rect x="2" y="8.8" width="3.6" height="2.6"/><rect x="2" y="12.8" width="3.6" height="2.6"/></g><g stroke="#333" stroke-width="0.9"><line x1="7.2" y1="6" x2="14.4" y2="6"/><line x1="7.2" y1="10" x2="14.4" y2="10"/><line x1="7.2" y1="14" x2="14.4" y2="14"/></g></g><line x1="1892" y1="125" x2="1918" y2="125" stroke="#d0d0d0" stroke-width="1.6" stroke-dasharray="1.4 1.4"/><g stroke-linecap="round"><line x1="1905.9" y1="139.8" x2="1913.5" y2="147.4" stroke="#d4d4d4" stroke-width="3.6"/><line x1="1896.4" y1="149.2" x2="1904.2" y2="156.8" stroke="#d4d4d4" stroke-width="3.6"/><line x1="1905.9" y1="139.8" x2="1913.5" y2="147.4" stroke="#1a78b0" stroke-width="2.2"/><line x1="1896.4" y1="149.2" x2="1904.2" y2="156.8" stroke="#1a78b0" stroke-width="2.2"/></g><line x1="1899.6" y1="147" x2="1904.6" y2="142.4" stroke="#e8e8e8" stroke-width="3.2"/><line x1="1899.6" y1="147" x2="1904.6" y2="142.4" stroke="#1a1a1a" stroke-width="2"/><polygon points="1897.6,145.4 1901.6,149.4 1897.4,149.6" fill="#1a1a1a"/><polygon points="1906.6,144 1902.6,140 1906.8,139.8" fill="#1a1a1a"/><rect x="1898.2" y="145" width="3.4" height="3.4" fill="#1a1a1a"/><rect x="1902.8" y="140.8" width="3.4" height="3.4" fill="#1a1a1a"/><g transform="translate(1896.00 162.50) scale(1)"><path d="M1,4 L1,16 M17,4 L17,16 M1,8 L17,8 M1,16 L17,16" stroke="#626262" stroke-width="1.6" fill="none"/><polygon points="2,8 5,6 5,10" fill="#626262"/><polygon points="16,8 13,6 13,10" fill="#626262"/></g><g transform="translate(1896.00 188.50) scale(1)"><rect x="1.6" y="2" width="15" height="14" fill="none" stroke="#626262" stroke-width="1.6"/><path d="M4,5.6 L14,5.6 M4,12.6 L14,12.6" stroke="#626262" stroke-width="1.3"/></g><g transform="translate(1896.00 214.50) scale(1)"><path d="M3,16 L3,3 L15,3 L15,16 M1,16 L17,16" stroke="#626262" stroke-width="1.6" fill="none"/><path d="M6,7 L12,7 M6,11 L12,11" stroke="#626262" stroke-width="1.3"/></g><g transform="translate(1896.00 242.00) scale(1)"><path d="M1,4 L1,16 M17,4 L17,16 M1,8 L17,8 M1,16 L17,16" stroke="#626262" stroke-width="1.6" fill="none"/><polygon points="2,8 5,6 5,10" fill="#626262"/><polygon points="16,8 13,6 13,10" fill="#626262"/></g><g transform="translate(1896.00 267.50) scale(1)"><rect x="1.6" y="2" width="15" height="14" fill="none" stroke="#626262" stroke-width="1.6"/><path d="M4,5.6 L14,5.6 M4,12.6 L14,12.6" stroke="#626262" stroke-width="1.3"/></g><g transform="translate(1896.00 293.50) scale(1)"><path d="M3,16 L3,3 L15,3 L15,16 M1,16 L17,16" stroke="#626262" stroke-width="1.6" fill="none"/><path d="M6,7 L12,7 M6,11 L12,11" stroke="#626262" stroke-width="1.3"/></g><g transform="translate(1896.00 320.00) scale(1)"><path d="M2,3 C2,15 6,16 16,16" stroke="#626262" stroke-width="2" fill="none"/><path d="M9,4 L15,4 M9,8 L15,8" stroke="#626262" stroke-width="1.2"/></g><g transform="translate(1896.00 346.00) scale(1)"><path d="M3,16 L3,3 L15,3 L15,16 M1,16 L17,16" stroke="#626262" stroke-width="1.6" fill="none"/><path d="M6,7 L12,7 M6,11 L12,11" stroke="#626262" stroke-width="1.3"/></g><g transform="translate(1896.00 372.00) scale(1)"><rect x="1.6" y="2" width="15" height="14" fill="none" stroke="#626262" stroke-width="1.6"/><path d="M4,5.6 L14,5.6 M4,12.6 L14,12.6" stroke="#626262" stroke-width="1.3"/></g><g transform="translate(1896.00 398.50) scale(1)"><path d="M2,3 C2,15 6,16 16,16" stroke="#626262" stroke-width="2" fill="none"/><path d="M9,4 L15,4 M9,8 L15,8" stroke="#626262" stroke-width="1.2"/></g><g transform="translate(1896.00 424.50) scale(1)"><ellipse cx="9" cy="9" rx="8" ry="6" fill="none" stroke="#626262" stroke-width="1.8"/><path d="M5,6 L13,6 L8,10 L13,13 L5,13" stroke="#626262" stroke-width="1.4" fill="none"/></g><g transform="translate(1896.00 451.00) scale(1)"><path d="M2,3 C2,15 6,16 16,16" stroke="#626262" stroke-width="2" fill="none"/><path d="M9,4 L15,4 M9,8 L15,8" stroke="#626262" stroke-width="1.2"/></g><g transform="translate(1896.00 477.00) scale(1)"><rect x="1.6" y="2" width="15" height="14" fill="none" stroke="#626262" stroke-width="1.6"/><path d="M4,5.6 L14,5.6 M4,12.6 L14,12.6" stroke="#626262" stroke-width="1.3"/></g><g transform="translate(1896.00 503.50) scale(1)"><path d="M9,1 L9,15 M1,15 L17,15 M9,9 L13,9 L13,15" stroke="#626262" stroke-width="1.6" fill="none"/></g><g transform="translate(1896.00 555.00) scale(1)"><path d="M9,1 L9,15 M1,15 L17,15 M9,9 L13,9 L13,15" stroke="#626262" stroke-width="1.6" fill="none"/></g><g transform="translate(1896.00 581.00) scale(1)"><path d="M3,6.4 L15,6.4 M3,11.4 L15,11.4" stroke="#626262" stroke-width="2.2" fill="none"/></g><g transform="translate(1896.00 605.00) scale(1)"><path d="M1,4 L1,16 M17,4 L17,16 M1,8 L17,8 M1,16 L17,16" stroke="#626262" stroke-width="1.6" fill="none"/><polygon points="2,8 5,6 5,10" fill="#626262"/><polygon points="16,8 13,6 13,10" fill="#626262"/></g><rect x="1892" y="526" width="26.5" height="24.5" fill="#242424" stroke="#101010" stroke-width="1"/><g transform="translate(1896.00 529.00) scale(1)"><path d="M3,17 L17,17" stroke="#f4f4f4" stroke-width="1.5"/><path d="M7,2 L7,17" stroke="#f4f4f4" stroke-width="1.5"/><rect x="10" y="10" width="3.4" height="7" fill="#3f8fc8"/><polygon points="13,0.6 17.6,1 13.6,6 16,6.2 8,13 10.4,7.6 8.4,7.4" fill="#f8a818" stroke="#c04808" stroke-width="0.7" stroke-linejoin="round"/></g><line x1="1889" y1="636.5" x2="1918" y2="636.5" stroke="#8a8a8a" stroke-width="1"/><g transform="translate(2.00 980.00) scale(1)"><g fill="#8484a2"><rect x="5" y="4" width="1.8" height="10"/><polygon points="15,4 15,14 7.6,9"/><polygon points="35,4 35,14 27,9"/><polygon points="47,4 47,14 55,9"/><polygon points="65,4 65,14 72.4,9"/><rect x="73.2" y="4" width="1.8" height="10"/></g></g><g transform="translate(1868.60 1009.60) scale(1)"><polygon points="0,4 6.4,4 3.2,0.4" fill="#f0f0f0"/></g><g transform="translate(1901.00 1002.00) scale(1)"><g fill="none" stroke="#f0f0f0" stroke-width="1.1"><polygon points="1,6 8,2 15,6 8,10"/><polyline points="1,9 8,13 15,9"/><polygon points="5,2.6 9,0.6 12,2.4 8,4.4" fill="#f0f0f0"/></g></g></svg>
<svg style="left:0;top:0" width="1918" height="1078" viewBox="0 0 1918 1078"><defs><linearGradient id="kWin" x1="0" y1="0" x2="1" y2="1"><stop offset="0" stop-color="#4cc2fa"/><stop offset="1" stop-color="#0a74d4"/></linearGradient><linearGradient id="kCloud" x1="0" y1="0" x2="0" y2="1"><stop offset="0" stop-color="#cfe0fb"/><stop offset="1" stop-color="#8fb6f2"/></linearGradient><linearGradient id="kDrop" x1="0" y1="0" x2="0" y2="1"><stop offset="0" stop-color="#58b0ff"/><stop offset="1" stop-color="#0a5af0"/></linearGradient><linearGradient id="kEdge" x1="0" y1="0" x2="1" y2="1"><stop offset="0" stop-color="#2fc4e8"/><stop offset="0.5" stop-color="#1a8ad8"/><stop offset="1" stop-color="#1458b8"/></linearGradient><linearGradient id="kEdge2" x1="0" y1="1" x2="1" y2="0"><stop offset="0" stop-color="#2ab8d8"/><stop offset="1" stop-color="#5fd84a"/></linearGradient><linearGradient id="kFold" x1="0" y1="0" x2="0" y2="1"><stop offset="0" stop-color="#ffd84a"/><stop offset="1" stop-color="#f4b41a"/></linearGradient><linearGradient id="kCop" x1="0" y1="0" x2="1" y2="1"><stop offset="0" stop-color="#2a7af0"/><stop offset="0.35" stop-color="#38c8b0"/><stop offset="0.55" stop-color="#f0c030"/><stop offset="0.75" stop-color="#f06a50"/><stop offset="1" stop-color="#c050e0"/></linearGradient><linearGradient id="kCop2" x1="0" y1="0" x2="1" y2="1"><stop offset="0" stop-color="#4a8af8"/><stop offset="0.5" stop-color="#a060f0"/><stop offset="1" stop-color="#f070b0"/></linearGradient><linearGradient id="kPhoto" x1="0" y1="0" x2="1" y2="1"><stop offset="0" stop-color="#2a6ae0"/><stop offset="1" stop-color="#2aa8f0"/></linearGradient><linearGradient id="kSky" x1="0" y1="0" x2="0" y2="1"><stop offset="0" stop-color="#14208a"/><stop offset="0.6" stop-color="#2a3ab0"/><stop offset="1" stop-color="#6a4aa0"/></linearGradient><radialGradient id="kFlame" cx="0.65" cy="0.45" r="0.5"><stop offset="0" stop-color="#ffd080"/><stop offset="0.4" stop-color="#f07820"/><stop offset="1" stop-color="#000" stop-opacity="0"/></radialGradient></defs><g transform="translate(25.00 1037.00) scale(1)"><path d="M6,16 C1,16 0,10 4.6,8.6 C5,3.6 11.6,1.6 14.6,5.6 C18,2.6 24,4.6 24,9.6 C30,9.6 31,16 26,17 Z" fill="url(#kCloud)"/><path d="M8.6,13.4 L14.4,19.6 C16.4,22.4 14.4,26 11.4,26 C8.6,26 7.4,23.6 7.8,21.6 Z" fill="url(#kDrop)"/><path d="M20,13.4 L25.8,19.6 C27.8,22.4 25.8,26 22.8,26 C20,26 18.8,23.6 19.2,21.6 Z" fill="url(#kDrop)"/></g><circle cx="48.7" cy="1037.7" r="10" fill="#c42b1c"/><text x="48.7" y="1043" font-family="Liberation Sans,sans-serif" font-size="14.5" fill="#fff" text-anchor="middle">7</text><g transform="translate(473.00 1036.20) scale(1)"><g fill="url(#kWin)"><rect x="0" y="0" width="13.6" height="13.4" rx="1"/><rect x="15.1" y="0" width="13.6" height="13.4" rx="1"/><rect x="0" y="14.8" width="13.6" height="13.4" rx="1"/><rect x="15.1" y="14.8" width="13.6" height="13.4" rx="1"/></g></g><g transform="translate(533.00 1040.60) scale(1)"><circle cx="7.4" cy="7.4" r="6.2" fill="none" stroke="#222" stroke-width="1.9"/><line x1="12" y1="12.2" x2="17.6" y2="18" stroke="#222" stroke-width="2.2" stroke-linecap="round"/></g><g transform="translate(726.00 1034.00) scale(1)"><path d="M2,12 C0,4 12,5 18,6 C22,0 34,-1 42,3 C50,1 60,4 60,12 C62,20 60,28 54,30 C44,34 20,34 10,30 C2,28 0,20 2,12 Z" fill="url(#kSky)"/><path d="M6,24 C14,21 50,21 58,23 C58,29 52,31 46,32 C34,34 18,33 10,30 C7,28.6 6,26 6,24 Z" fill="#2a8a9a"/><path d="M14,28 C24,26 44,26 52,28 C46,32 24,33 14,28 Z" fill="#e89a40"/><g fill="#e8884a"><rect x="9" y="14" width="7" height="10"/><rect x="17" y="16" width="6" height="8"/><rect x="24" y="13" width="7" height="11"/><rect x="38" y="14" width="7" height="10"/><rect x="46" y="16" width="7" height="8"/></g><rect x="31" y="15" width="7" height="9" fill="#c45a6a"/><rect x="32.6" y="5" width="3.4" height="11" fill="#f0b040"/><polygon points="32,5 34.3,2 36.6,5" fill="#c43a2a"/><g fill="#5a2a50"><rect x="10.6" y="17" width="1.6" height="2.4"/><rect x="13" y="17" width="1.6" height="2.4"/><rect x="26" y="16" width="1.6" height="2.4"/><rect x="40" y="17" width="1.6" height="2.4"/><rect x="48" y="19" width="1.6" height="2.4"/></g></g><g transform="translate(809.00 1036.00) scale(1)"><rect x="0.4" y="7.6" width="22" height="19.4" rx="2" fill="#1f1f1f"/><rect x="7.6" y="0.4" width="21.4" height="19" rx="2" fill="#fafafa" fill-opacity="0.92" stroke="#e0e0e0" stroke-width="0.6"/><rect x="7.6" y="7.6" width="14.8" height="11.8" fill="#b8b8b8" fill-opacity="0.75"/></g><g transform="translate(863.50 1035.00) scale(1)"><path d="M15.4,0.4 C25,0.4 31,8 30.4,15 C30,20 26,22 22,21.4 C18,20.8 17,17 19,14.6 C20,11 15.4,8 11,10 C6,12 5,18 7,22 C2,18 -1,10 4,5 C7,2 11,0.4 15.4,0.4 Z" fill="url(#kEdge2)"/><path d="M1,13 C-0.6,22 6,30 15.4,30 C21,30 25,28 27.4,24 C22,27 14,25.6 11.6,19.6 C10,15 12,11.6 15.4,10.6 C9,8.6 2.6,8 1,13 Z" fill="url(#kEdge)"/><circle cx="8" cy="24.6" r="6" fill="#bdbdbd" stroke="#eee" stroke-width="0.8"/><circle cx="8" cy="22.6" r="2.2" fill="#7a7a7a"/><path d="M3.6,28 C4.4,24.6 11.6,24.6 12.4,28 C10,30.6 6,30.6 3.6,28 Z" fill="#7a7a7a"/></g><g transform="translate(918.80 1037.00) scale(1)"><path d="M0,3 C0,1.4 1,0.4 2.6,0.4 L10,0.4 L13,3.4 L27.4,3.4 C29,3.4 30,4.4 30,6 L30,23 C30,25 29,26 27,26 L3,26 C1,26 0,25 0,23 Z" fill="#f0a818"/><rect x="0" y="5.4" width="30" height="20.6" rx="2.4" fill="url(#kFold)"/><path d="M5,20 C5,18.6 6,18 7,18 L23,18 C24,18 25,18.6 25,20 L25,26 L5,26 Z" fill="#1a78d8"/><rect x="9.6" y="20.6" width="10.8" height="2" rx="1" fill="#0a4a98"/></g><g transform="translate(973.50 1034.50) scale(1)"><path d="M11,2 C13,0.4 17,0.4 19,3 L23,12 C24,14 26,15 28,15 C30.4,15.4 30.6,18 29.4,20.4 L26,27 C24.6,29.6 22,30.4 19,30 L12,30 C8,30 7,27 6,25 L3,18 C2,16 0.4,15.6 0.6,13 L3,6 C4.4,3 7,2 11,2 Z" fill="url(#kCop)"/><path d="M13,7 C15,5 18,6 19,8.6 L22,17 C23,20 25,21 27.6,21 L25.6,25.4 C24.6,27 23,27.6 21,27 C18,26 17.4,24 16.6,22 L13,13 C12,10 10.6,10 8,10 C9,8.6 11,8 13,7 Z" fill="#fff" fill-opacity="0.35"/><path d="M19,3 C22,2.4 26,3 28,7 C30,11 29.6,14 28,15 C26,15 24,14 23,12 Z" fill="url(#kCop2)"/></g><g transform="translate(1029.00 1036.00) scale(1)"><path d="M8.6,5 L8.6,2.6 C8.6,1.4 9.6,0.6 10.6,0.6 L18.2,0.6 C19.2,0.6 20.2,1.4 20.2,2.6 L20.2,5" fill="none" stroke="#4cc2fa" stroke-width="1.8"/><rect x="0" y="4.6" width="28.8" height="24.2" rx="3.6" fill="#0f4a8a"/><rect x="8.6" y="11" width="5.4" height="5.4" fill="#f25022"/><rect x="14.8" y="11" width="5.4" height="5.4" fill="#7fba00"/><rect x="8.6" y="17.2" width="5.4" height="5.4" fill="#00a4ef"/><rect x="14.8" y="17.2" width="5.4" height="5.4" fill="#ffb900"/></g><g transform="translate(1083.80 1035.00) scale(1)"><rect x="0" y="0" width="30" height="30" rx="7" fill="#1a1f3c"/><path d="M15,5 C18,7 21.6,7.6 24,7.6 C24,16 22,22 15,25.4 C8,22 6,16 6,7.6 C8.4,7.6 12,7 15,5 Z" fill="#1a8af0"/><path d="M15,8 C17.4,9.4 19.6,9.8 21.4,10 C21.2,16 19.6,20 15,22.4 C10.4,20 8.8,16 8.6,10 C10.4,9.8 12.6,9.4 15,8 Z" fill="#1a1f3c"/><path d="M19.6,10.6 C16,11 13,13.6 11.6,17 L13.6,19 C17,17.6 19.4,14.6 19.6,10.6 Z" fill="#3ab8f8"/><polygon points="10.6,16 9,19.6 12.4,20.4" fill="#3ab8f8"/></g><g transform="translate(1153.40 1050.00) scale(1)"><circle r="14.5" fill="#fbbc05"/><path d="M0,0 L-12.56,-7.25 A14.5,14.5 0 0 1 12.56,-7.25 Z" fill="#ea4335"/><path d="M0,0 L-12.56,-7.25 A14.5,14.5 0 0 0 0,14.5 L6,3.4 Z" fill="#34a853"/><path d="M-12.56,-7.25 L12.56,-7.25 L0,-7.25 Z" fill="#ea4335"/><circle r="6.6" fill="#fff"/><circle r="5.2" fill="#4285f4"/></g><circle cx="1164.6" cy="1038.8" r="10" fill="#6868c4"/><text x="1164.6" y="1043.4" font-family="Liberation Sans,sans-serif" font-size="12.6" fill="#e0e0f4" text-anchor="middle">Y</text><g transform="translate(1193.30 1034.30) scale(1)"><polygon points="1,6.4 15,0.4 29,6.4 29,22.6 15,29.4 1,22.6" fill="#c01818"/><polygon points="1,6.4 15,0.4 29,6.4 15,10.6" fill="#e03030"/><polygon points="15,10.6 29,6.4 29,22.6 15,29.4" fill="#981010"/><text x="8.4" y="21.6" font-family="Liberation Sans,sans-serif" font-weight="700" font-size="14" fill="#fff" text-anchor="middle">S</text><text x="21.8" y="21.4" font-family="Liberation Sans,sans-serif" font-weight="700" font-size="13" fill="#fff" text-anchor="middle">W</text><rect x="11" y="21.6" width="19" height="8.4" rx="1.6" fill="#111"/><text x="20.5" y="28.8" font-family="Liberation Sans,sans-serif" font-weight="700" font-size="8.4" fill="#fff" text-anchor="middle">2025</text></g><g transform="translate(1248.80 1036.00) scale(1)"><rect x="0" y="1" width="30.4" height="8.4" rx="1.4" fill="#c8185a"/><rect x="0" y="9.8" width="30.4" height="8.4" rx="1.4" fill="#2a3ab8"/><rect x="0" y="18.6" width="30.4" height="8.4" rx="1.4" fill="#1a8a2a"/><g fill="#fff" fill-opacity="0.25"><rect x="0" y="1.4" width="30.4" height="2"/><rect x="0" y="10.2" width="30.4" height="2"/><rect x="0" y="19" width="30.4" height="2"/></g><rect x="11.4" y="0" width="7.6" height="27.4" fill="#d88a2a"/><rect x="10" y="10.6" width="10.4" height="7.4" rx="1" fill="#8a5a1a"/><rect x="12" y="12.4" width="6.4" height="3.8" fill="#f0f0f0"/><rect x="13.6" y="13.4" width="3.2" height="1.8" fill="#8a5a1a"/></g><g transform="translate(1304.60 1037.70) scale(1)"><rect x="0" y="0" width="28.8" height="26.2" fill="#050505" stroke="#fafafa" stroke-width="0.8"/><path d="M3,4 C10,6 17,14 18,24 C12,20 6,12 3,4 Z" fill="#2a7af0" fill-opacity="0.9"/><path d="M6,3 C13,6 19,12 21,22 C15,18 9,10 6,3 Z" fill="#58b8ff" fill-opacity="0.55"/><rect x="8" y="2" width="20" height="22" fill="url(#kFlame)"/><circle cx="20.6" cy="13.6" r="1.4" fill="#fff8d0"/></g><g transform="translate(1361.00 1037.00) scale(1)"><rect x="0" y="0" width="26.6" height="26" rx="4.6" fill="url(#kPhoto)"/><polygon points="0,22 12,9.6 26.6,24 26.6,26 0,26" fill="#58c8f8"/><path d="M0,26 L0,22 L10,12 L24,26 Z" fill="#7adcff" fill-opacity="0.7"/><polygon points="12,26 19.6,17 26.6,23 26.6,26" fill="#2a9ae8"/><circle cx="19.6" cy="5.6" r="2.4" fill="#fff"/></g><g transform="translate(1414.60 1035.00) scale(1)"><rect x="0" y="0" width="21.4" height="21.4" rx="3.4" fill="#e4e4e6"/><path d="M2.6,12 L2.6,5 C2.6,3.6 3.6,2.6 5,2.6 L12,2.6" fill="none" stroke="#d83a2a" stroke-width="2" stroke-dasharray="3 1.6"/><path d="M4,18.6 L19,18.6" stroke="#bdbdbd" stroke-width="1.6"/><line x1="17.6" y1="4" x2="17.6" y2="25" stroke="#9a9a9a" stroke-width="1.8"/><line x1="6" y1="17.6" x2="27" y2="17.6" stroke="#9a9a9a" stroke-width="1.8"/><circle cx="30" cy="15" r="2.8" fill="none" stroke="#1a8ae0" stroke-width="1.8"/><circle cx="18.6" cy="29" r="2.8" fill="none" stroke="#1a8ae0" stroke-width="1.8"/></g><g transform="translate(1541.40 1046.00) scale(1)"><polyline points="0.8,7 6.8,1 12.8,7" fill="none" stroke="#222" stroke-width="1.7" stroke-linecap="round" stroke-linejoin="round"/></g><g transform="translate(1578.70 1040.30) scale(1)"><path d="M9.2,0 C12,1.6 15,2.4 18.4,2.6 C18.4,10 16,15 9.2,18 C2.4,15 0,10 0,2.6 C3.4,2.4 6.4,1.6 9.2,0 Z" fill="#1a8ae0"/><path d="M9.2,0 C12,1.6 15,2.4 18.4,2.6 C18.4,5 18.2,7 17.6,9 L9.2,9 Z" fill="#3ab8f0"/><path d="M9.2,9 L0.8,9 C2,13 4.6,16 9.2,18 Z" fill="#3ab8f0"/><polygon points="13.6,9 19.2,18.4 8,18.4" fill="#ffc820" stroke="#fff" stroke-width="0.5"/><rect x="13" y="12" width="1.3" height="3.4" fill="#222"/><rect x="13" y="16" width="1.3" height="1.3" fill="#222"/></g><g transform="translate(1713.00 1042.40) scale(1)"><g fill="none" stroke="#222" stroke-width="1.5" stroke-linecap="round"><path d="M0.8,5.6 C6,0.2 14,0.2 19.2,5.6"/><path d="M3.8,8.8 C7.4,5 12.6,5 16.2,8.8"/><path d="M6.8,12 C8.8,10 11.2,10 13.2,12"/></g><circle cx="10" cy="14.6" r="1.3" fill="#222"/></g><g transform="translate(1743.00 1042.60) scale(1)"><path d="M0.8,5 L3.6,5 L8,1 L8,14.4 L3.6,10.4 L0.8,10.4 Z" fill="none" stroke="#222" stroke-width="1.3" stroke-linejoin="round"/><path d="M10.6,4.8 C12,6.4 12,9 10.6,10.6" fill="none" stroke="#222" stroke-width="1.3" stroke-linecap="round"/><path d="M13,2.6 C15.4,5.4 15.4,10 13,12.8" fill="none" stroke="#222" stroke-width="1.3" stroke-linecap="round"/><path d="M15.6,0.6 C19,4.6 19,10.8 15.6,14.8" fill="none" stroke="#b8b8b8" stroke-width="1.3" stroke-linecap="round"/></g><g transform="translate(1773.20 1040.60) scale(1)"><rect x="0.8" y="3.4" width="21.6" height="11.4" rx="2.8" fill="#168a16" stroke="#1a1a1a" stroke-width="1.5"/><rect x="23" y="6.6" width="1.8" height="5" rx="0.9" fill="#1a1a1a"/><polygon points="12.6,0 9,6.4 11.6,6.4 10.4,11 14.6,4.6 12,4.6 13.4,0" fill="#1a1a1a" stroke="#eee" stroke-width="0.7"/></g></svg>
<span class="t" style="left:1003.00px;top:10.50px;font-size:14.5px;line-height:20px;letter-spacing:-0.160px;color:#d8d8d8;">block mouteur</span>
<span class="t" style="left:1488.00px;top:10.50px;font-size:14px;line-height:20px;letter-spacing:-0.722px;color:#707070;">Search Commands</span>
<span class="t" style="left:33.50px;top:66.00px;font-size:14.5px;line-height:20px;letter-spacing:-0.750px;color:#8e8e8e;">Edit</span>
<span class="t" style="left:8.00px;top:85.00px;font-size:14.5px;line-height:20px;letter-spacing:-0.274px;color:#8e8e8e;">Component</span>
<span class="t" style="left:91.50px;top:66.00px;font-size:14.5px;line-height:20px;letter-spacing:-0.324px;color:#f0f0f0;">Insert Components</span>
<span class="t" style="left:219.00px;top:66.00px;font-size:14.5px;line-height:20px;letter-spacing:-0.188px;color:#f0f0f0;">Mate</span>
<span class="t" style="left:275.00px;top:66.00px;font-size:14.5px;line-height:20px;letter-spacing:-0.274px;color:#8e8e8e;">Component</span>
<span class="t" style="left:261.00px;top:85.00px;font-size:14.5px;line-height:20px;letter-spacing:-0.477px;color:#8e8e8e;">Preview Window</span>
<span class="t" style="left:372.00px;top:66.00px;font-size:14.5px;line-height:20px;letter-spacing:-0.316px;color:#f0f0f0;">Linear Component Pattern</span>
<span class="t" style="left:556.00px;top:66.00px;font-size:14.5px;line-height:20px;letter-spacing:-0.584px;color:#f0f0f0;">Smart</span>
<span class="t" style="left:545.50px;top:85.00px;font-size:14.5px;line-height:20px;letter-spacing:-0.776px;color:#f0f0f0;">Fasteners</span>
<span class="t" style="left:613.00px;top:66.00px;font-size:14.5px;line-height:20px;letter-spacing:-0.211px;color:#f0f0f0;">Move Component</span>
<span class="t" style="left:738.00px;top:66.00px;font-size:14.5px;line-height:20px;letter-spacing:-0.545px;color:#f0f0f0;">Show Hidden</span>
<span class="t" style="left:739.00px;top:85.00px;font-size:14.5px;line-height:20px;letter-spacing:-0.372px;color:#f0f0f0;">Components</span>
<span class="t" style="left:832.00px;top:66.00px;font-size:14.5px;line-height:20px;letter-spacing:-0.913px;color:#f0f0f0;">Assemb...</span>
<span class="t" style="left:900.00px;top:66.00px;font-size:14.5px;line-height:20px;letter-spacing:-0.947px;color:#f0f0f0;">Referenc...</span>
<span class="t" style="left:974.00px;top:66.00px;font-size:14.5px;line-height:20px;letter-spacing:-0.106px;color:#f0f0f0;">New Motion</span>
<span class="t" style="left:994.00px;top:85.00px;font-size:14.5px;line-height:20px;letter-spacing:-0.469px;color:#f0f0f0;">Study</span>
<span class="t" style="left:1074.50px;top:66.00px;font-size:14.5px;line-height:20px;letter-spacing:-0.353px;color:#f0f0f0;">Bill of</span>
<span class="t" style="left:1063.50px;top:85.00px;font-size:14.5px;line-height:20px;letter-spacing:-0.398px;color:#f0f0f0;">Materials</span>
<span class="t" style="left:1132.50px;top:66.00px;font-size:14.5px;line-height:20px;letter-spacing:-0.629px;color:#f0f0f0;">Exploded View</span>
<span class="t" style="left:1233.00px;top:66.00px;font-size:14.5px;line-height:20px;letter-spacing:-0.148px;color:#f0f0f0;">Instant3D</span>
<span class="t" style="left:1307.00px;top:66.00px;font-size:14.5px;line-height:20px;letter-spacing:-0.680px;color:#f0f0f0;">Update SpeedPak</span>
<span class="t" style="left:1317.00px;top:85.00px;font-size:14.5px;line-height:20px;letter-spacing:-0.833px;color:#f0f0f0;">Subassemblies</span>
<span class="t" style="left:1443.00px;top:66.00px;font-size:14.5px;line-height:20px;letter-spacing:-1.160px;color:#f0f0f0;">Take</span>
<span class="t" style="left:1428.00px;top:85.00px;font-size:14.5px;line-height:20px;letter-spacing:-0.535px;color:#f0f0f0;">Snapshot</span>
<span class="t" style="left:1495.50px;top:66.00px;font-size:14.5px;line-height:20px;letter-spacing:-0.566px;color:#f0f0f0;">Large Assembly</span>
<span class="t" style="left:1518.00px;top:85.00px;font-size:14.5px;line-height:20px;letter-spacing:-0.457px;color:#f0f0f0;">Settings</span>
<span class="t" style="left:10.00px;top:125.00px;font-size:15px;line-height:21px;letter-spacing:-0.359px;color:#ffffff;font-weight:700;">Assembly</span>
<span class="t" style="left:98.25px;top:125.50px;font-size:14.5px;line-height:20px;letter-spacing:0.034px;color:#f0f0f0;">Layout</span>
<span class="t" style="left:161.25px;top:125.50px;font-size:14.5px;line-height:20px;letter-spacing:-0.307px;color:#f0f0f0;">Sketch</span>
<span class="t" style="left:224.00px;top:125.50px;font-size:14.5px;line-height:20px;letter-spacing:0.148px;color:#f0f0f0;">Markup</span>
<span class="t" style="left:293.00px;top:125.50px;font-size:14.5px;line-height:20px;letter-spacing:-0.148px;color:#f0f0f0;">Evaluate</span>
<span class="t" style="left:370.25px;top:125.50px;font-size:14.5px;line-height:20px;letter-spacing:-0.208px;color:#f0f0f0;">SOLIDWORKS Add-Ins</span>
<span class="t" style="left:543.00px;top:125.50px;font-size:14.5px;line-height:20px;letter-spacing:-0.503px;color:#f0f0f0;">SOLIDWORKS CAM</span>
<span class="t" style="left:51.50px;top:240.30px;font-size:14.5px;line-height:20px;letter-spacing:0.309px;color:#ececec;width:198.00px;overflow:hidden;">block mouteur (Default) &lt;Display State-1&gt;</span>
<span class="t" style="left:50.40px;top:264.30px;font-size:14.5px;line-height:20px;letter-spacing:0.196px;color:#ececec;width:199.10px;overflow:hidden;">History</span>
<span class="t" style="left:50.40px;top:288.30px;font-size:14.5px;line-height:20px;letter-spacing:-0.572px;color:#ececec;width:199.10px;overflow:hidden;">Sensors</span>
<span class="t" style="left:50.40px;top:312.30px;font-size:14.5px;line-height:20px;letter-spacing:0.273px;color:#ececec;width:199.10px;overflow:hidden;">Annotations</span>
<span class="t" style="left:50.40px;top:336.30px;font-size:14.5px;line-height:20px;letter-spacing:-0.134px;color:#ececec;width:199.10px;overflow:hidden;">Front Plane</span>
<span class="t" style="left:50.40px;top:360.30px;font-size:14.5px;line-height:20px;letter-spacing:0.100px;color:#ececec;width:199.10px;overflow:hidden;">Top Plane</span>
<span class="t" style="left:50.40px;top:384.30px;font-size:14.5px;line-height:20px;letter-spacing:-0.061px;color:#ececec;width:199.10px;overflow:hidden;">Right Plane</span>
<span class="t" style="left:50.40px;top:408.30px;font-size:14.5px;line-height:20px;letter-spacing:0.319px;color:#ececec;width:199.10px;overflow:hidden;">Origin</span>
<span class="t" style="left:74.60px;top:432.30px;font-size:14.5px;line-height:20px;letter-spacing:0.249px;color:#ececec;width:174.90px;overflow:hidden;">centre beam17-1&lt;1&gt; (Default) &lt;&lt;Default&gt;</span>
<span class="t" style="left:50.65px;top:456.30px;font-size:14.5px;line-height:20px;letter-spacing:0.317px;color:#ececec;width:198.85px;overflow:hidden;">(f) Front beam&lt;1&gt; (Default) &lt;&lt;Default&gt;</span>
<span class="t" style="left:74.60px;top:480.30px;font-size:14.5px;line-height:20px;letter-spacing:0.271px;color:#ececec;width:174.90px;overflow:hidden;">(-) centre beam 17-2&lt;2&gt; (Default) &lt;&lt;</span>
<span class="t" style="left:50.65px;top:504.30px;font-size:14.5px;line-height:20px;letter-spacing:0.115px;color:#ececec;width:198.85px;overflow:hidden;">(-) POST&lt;1&gt; (Default) &lt;&lt;Default&gt;_Dis</span>
<span class="t" style="left:50.65px;top:528.30px;font-size:14.5px;line-height:20px;letter-spacing:0.302px;color:#ececec;width:198.85px;overflow:hidden;">(-) rear support beam&lt;1&gt; (Default) &lt;&lt;</span>
<span class="t" style="left:50.65px;top:552.30px;font-size:14.5px;line-height:20px;letter-spacing:0.380px;color:#ececec;width:198.85px;overflow:hidden;">(-) Support&lt;1&gt; (Default) &lt;&lt;Default&gt;_</span>
<span class="t" style="left:50.65px;top:576.30px;font-size:14.5px;line-height:20px;letter-spacing:0.380px;color:#ececec;width:198.85px;overflow:hidden;">(-) Support&lt;2&gt; (Default) &lt;&lt;Default&gt;_</span>
<span class="t" style="left:50.65px;top:600.30px;font-size:14.5px;line-height:20px;letter-spacing:0.471px;color:#ececec;width:198.85px;overflow:hidden;">(-) rotating plate&lt;1&gt; (Default) &lt;&lt;Defa</span>
<span class="t" style="left:50.65px;top:624.30px;font-size:14.5px;line-height:20px;letter-spacing:0.353px;color:#ececec;width:198.85px;overflow:hidden;">(-) plus plate&lt;1&gt; (Default) &lt;&lt;Default</span>
<span class="t" style="left:74.60px;top:648.30px;font-size:14.5px;line-height:20px;letter-spacing:0.428px;color:#ececec;width:174.90px;overflow:hidden;">(-) mounting arm&lt;1&gt; (Default) &lt;&lt;De</span>
<span class="t" style="left:74.60px;top:672.30px;font-size:14.5px;line-height:20px;letter-spacing:0.428px;color:#ececec;width:174.90px;overflow:hidden;">(-) mounting arm&lt;2&gt; (Default) &lt;&lt;De</span>
<span class="t" style="left:74.60px;top:696.30px;font-size:14.5px;line-height:20px;letter-spacing:0.428px;color:#ececec;width:174.90px;overflow:hidden;">(-) mounting arm&lt;3&gt; (Default) &lt;&lt;De</span>
<span class="t" style="left:74.60px;top:720.30px;font-size:14.5px;line-height:20px;letter-spacing:0.428px;color:#ececec;width:174.90px;overflow:hidden;">(-) mounting arm&lt;5&gt; (Default) &lt;&lt;De</span>
<span class="t" style="left:50.65px;top:744.30px;font-size:14.5px;line-height:20px;letter-spacing:0.069px;color:#ececec;width:198.85px;overflow:hidden;">(-) TURBIN streering&lt;5&gt; (Default) &lt;&lt;</span>
<span class="t" style="left:50.65px;top:768.30px;font-size:14.5px;line-height:20px;letter-spacing:0.261px;color:#ececec;width:198.85px;overflow:hidden;">(-) crank handle&lt;1&gt; (Default) &lt;&lt;Defau</span>
<span class="t" style="left:50.65px;top:792.30px;font-size:14.5px;line-height:20px;letter-spacing:0.360px;color:#ececec;width:198.85px;overflow:hidden;">(-) wheel&lt;1&gt; (Default) &lt;&lt;Default&gt;_D</span>
<span class="t" style="left:50.65px;top:816.30px;font-size:14.5px;line-height:20px;letter-spacing:0.360px;color:#ececec;width:198.85px;overflow:hidden;">(-) wheel&lt;2&gt; (Default) &lt;&lt;Default&gt;_D</span>
<span class="t" style="left:74.60px;top:840.30px;font-size:14.5px;line-height:20px;letter-spacing:0.354px;color:#ececec;width:174.90px;overflow:hidden;">(-) hala&lt;1&gt; -&gt;? (Default) &lt;&lt;Default</span>
<span class="t" style="left:74.60px;top:864.30px;font-size:14.5px;line-height:20px;letter-spacing:0.375px;color:#ececec;width:174.90px;overflow:hidden;">(-) hjul&lt;1&gt; (Default) &lt;&lt;Default&gt;_Di</span>
<span class="t" style="left:50.65px;top:888.30px;font-size:14.5px;line-height:20px;letter-spacing:0.184px;color:#ececec;width:198.85px;overflow:hidden;">(-) flat washer narrow_am&lt;1&gt;</span>
<span class="t" style="left:50.65px;top:912.30px;font-size:14.5px;line-height:20px;letter-spacing:0.184px;color:#ececec;width:198.85px;overflow:hidden;">(-) flat washer narrow_am&lt;2&gt;</span>
<span class="t" style="left:50.65px;top:936.30px;font-size:14.5px;line-height:20px;letter-spacing:0.184px;color:#ececec;width:198.85px;overflow:hidden;">(-) flat washer narrow_am&lt;3&gt;</span>
<span class="t" style="left:98.70px;top:977.50px;font-size:15.2px;line-height:21px;letter-spacing:0.745px;color:#ffffff;font-weight:700;">Model</span>
<span class="t" style="left:172.50px;top:977.50px;font-size:15.2px;line-height:21px;letter-spacing:0.263px;color:#f0f0f0;">Motion Study 1</span>
<span class="t" style="left:1.00px;top:1001.00px;font-size:14.5px;line-height:20px;letter-spacing:-0.529px;color:#f0f0f0;">SOLIDWORKS 2025 SP0.0</span>
<span class="t" style="left:1446.00px;top:1001.00px;font-size:14.5px;line-height:20px;letter-spacing:0.192px;color:#f0f0f0;">Under Defined</span>
<span class="t" style="left:1561.00px;top:1001.00px;font-size:14.5px;line-height:20px;letter-spacing:0.224px;color:#f0f0f0;">Editing Assembly</span>
<span class="t" style="left:1797.00px;top:1001.00px;font-size:14.5px;line-height:20px;letter-spacing:-0.078px;color:#f0f0f0;">Custom</span>
<span class="t" style="left:565.60px;top:1038.70px;font-size:16.5px;line-height:23px;letter-spacing:-0.314px;color:#5a5a5a;">Search</span>
<span class="t" style="left:64.50px;top:1029.60px;font-size:14.5px;line-height:20px;letter-spacing:-0.877px;color:#1a1a1a;">10°C</span>
<span class="t" style="left:64.50px;top:1048.60px;font-size:14.5px;line-height:20px;letter-spacing:-0.387px;color:#5c5c5c;">Regen</span>
<span class="t" style="left:1662.00px;top:1040.50px;font-size:14px;line-height:20px;letter-spacing:-0.781px;color:#202020;">ENG</span>
<span class="t" style="left:1860.50px;top:1029.50px;font-size:14px;line-height:20px;letter-spacing:0.191px;color:#202020;">15:38</span>
<span class="t" style="left:1819.50px;top:1049.50px;font-size:14px;line-height:20px;letter-spacing:0.692px;color:#202020;">08/02/2026</span>
</div></body></html>
